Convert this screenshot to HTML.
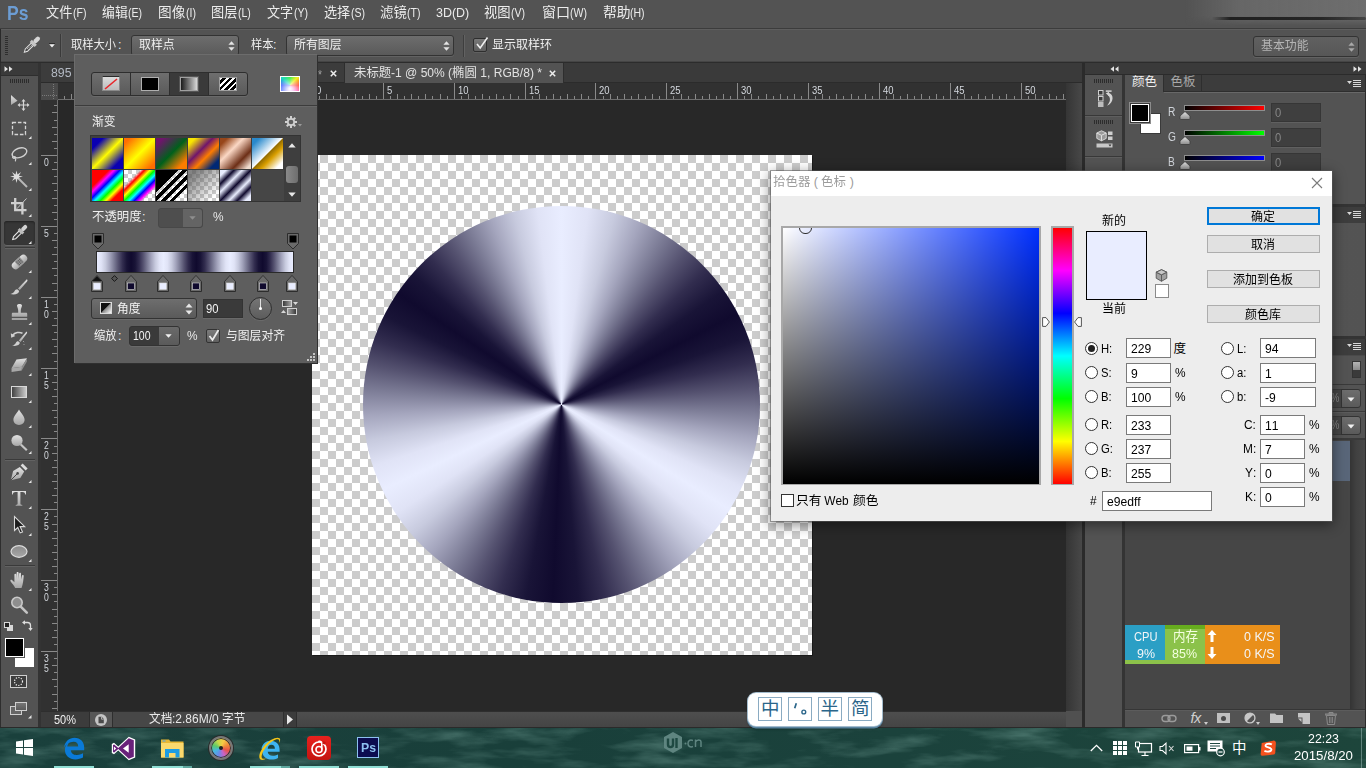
<!DOCTYPE html>
<html lang="zh"><head><meta charset="utf-8"><title>Photoshop</title><style>
html,body{margin:0;padding:0;background:#1f4841;}
body{width:1366px;height:768px;overflow:hidden;position:relative;font-family:"Liberation Sans","Noto Sans CJK SC",sans-serif;font-kerning:none;}
.b{position:absolute;display:block}
.t{position:absolute;white-space:nowrap;stroke-width:11px}
.l{display:inline-block;white-space:nowrap}
.l>span{display:inline-block;transform-origin:0 50%;white-space:nowrap}
</style></head><body>

<!-- s_base -->
<div class="b" style="left:0px;top:0px;width:1366px;height:728px;background:#535353;"></div><div class="b" style="left:0px;top:28px;width:1366px;height:1px;background:#3c3c3c;"></div><div class="b" style="left:0px;top:29px;width:1366px;height:1px;background:#5e5e5e;"></div><div class="t" style="left:7px;top:1.5px;font-size:21px;line-height:21px;color:#6c9dd4;font-weight:bold;"><span class="l" style="width:21.50px"><span style="transform:scaleX(0.837)">Ps</span></span></div><div class="t" style="left:46.4px;top:6px;font-size:13.5px;line-height:13.5px;color:#ececec;stroke:currentColor;stroke-width:14"><span class="l" style="width:26.35px"><span style="transform:scaleX(0.976)">文件</span></span><span class="l" style="width:13.45px"><span style="transform:scaleX(0.780)">(F)</span></span></div><div class="t" style="left:102.4px;top:6px;font-size:13.5px;line-height:13.5px;color:#ececec;stroke:currentColor;stroke-width:14"><span class="l" style="width:25.76px"><span style="transform:scaleX(0.954)">编辑</span></span><span class="l" style="width:14.04px"><span style="transform:scaleX(0.780)">(E)</span></span></div><div class="t" style="left:158.4px;top:6px;font-size:13.5px;line-height:13.5px;color:#ececec;stroke:currentColor;stroke-width:14"><span class="l" style="width:27.26px"><span style="transform:scaleX(1.010)">图像</span></span><span class="l" style="width:9.94px"><span style="transform:scaleX(0.780)">(I)</span></span></div><div class="t" style="left:211.4px;top:6px;font-size:13.5px;line-height:13.5px;color:#ececec;stroke:currentColor;stroke-width:14"><span class="l" style="width:26.33px"><span style="transform:scaleX(0.975)">图层</span></span><span class="l" style="width:12.87px"><span style="transform:scaleX(0.780)">(L)</span></span></div><div class="t" style="left:267.4px;top:6px;font-size:13.5px;line-height:13.5px;color:#ececec;stroke:currentColor;stroke-width:14"><span class="l" style="width:26.16px"><span style="transform:scaleX(0.969)">文字</span></span><span class="l" style="width:14.04px"><span style="transform:scaleX(0.780)">(Y)</span></span></div><div class="t" style="left:324.4px;top:6px;font-size:13.5px;line-height:13.5px;color:#ececec;stroke:currentColor;stroke-width:14"><span class="l" style="width:26.16px"><span style="transform:scaleX(0.969)">选择</span></span><span class="l" style="width:14.04px"><span style="transform:scaleX(0.780)">(S)</span></span></div><div class="t" style="left:380.4px;top:6px;font-size:13.5px;line-height:13.5px;color:#ececec;stroke:currentColor;stroke-width:14"><span class="l" style="width:26.75px"><span style="transform:scaleX(0.991)">滤镜</span></span><span class="l" style="width:13.45px"><span style="transform:scaleX(0.780)">(T)</span></span></div><div class="t" style="left:435.9px;top:6px;font-size:13.5px;line-height:13.5px;color:#ececec;stroke:currentColor;stroke-width:14"><span class="l" style="width:33.20px"><span style="transform:scaleX(0.922)">3D(D)</span></span></div><div class="t" style="left:484.4px;top:6px;font-size:13.5px;line-height:13.5px;color:#ececec;stroke:currentColor;stroke-width:14"><span class="l" style="width:26.66px"><span style="transform:scaleX(0.987)">视图</span></span><span class="l" style="width:14.04px"><span style="transform:scaleX(0.780)">(V)</span></span></div><div class="t" style="left:541.9px;top:6px;font-size:13.5px;line-height:13.5px;color:#ececec;stroke:currentColor;stroke-width:14"><span class="l" style="width:28.25px"><span style="transform:scaleX(1.046)">窗口</span></span><span class="l" style="width:16.95px"><span style="transform:scaleX(0.780)">(W)</span></span></div><div class="t" style="left:602.9px;top:6px;font-size:13.5px;line-height:13.5px;color:#ececec;stroke:currentColor;stroke-width:14"><span class="l" style="width:27.58px"><span style="transform:scaleX(1.021)">帮助</span></span><span class="l" style="width:14.62px"><span style="transform:scaleX(0.780)">(H)</span></span></div><div class="b" style="left:1185px;top:0px;width:181px;height:26px;background:linear-gradient(90deg,rgba(106,106,106,0) 0%,rgba(106,106,106,.85) 30%,rgba(110,110,110,1) 100%);-webkit-mask:linear-gradient(180deg,#000 0,#000 60%,transparent 100%);mask:linear-gradient(180deg,#000 0,#000 60%,transparent 100%)"></div><div class="b" style="left:1212px;top:17px;width:154px;height:3px;background:linear-gradient(90deg,rgba(30,30,30,0),rgba(28,28,28,.95) 12%,rgba(34,34,34,.95) 70%,rgba(60,60,60,.8));filter:blur(.7px);border-radius:2px"></div><div class="b" style="left:0px;top:61px;width:1366px;height:1px;background:#454545;"></div><div class="b" style="left:0px;top:62px;width:1366px;height:1px;background:#2c2c2c;"></div><div class="b" style="left:5px;top:36px;width:3px;height:20px;background:repeating-linear-gradient(180deg,#2e2e2e 0 1px,transparent 1px 2px);"></div><div class="b" style="left:60px;top:34px;width:1px;height:23px;background:#3a3a3a;"></div><div class="b" style="left:61px;top:34px;width:1px;height:23px;background:#5e5e5e;"></div><svg class="b" style="left:22px;top:35px;" width="19" height="19" viewBox="0 0 19 19"><g transform="translate(.9 1.2) scale(.92) rotate(45 9.5 9.5)"><path d="M7.700 8.500h3.600v9l-1.800 3.200-1.800-3.200z" fill="#4a4a4a" stroke="#e2e2e2" stroke-width="1.100"/><path d="M8.300 10h2.400M8.300 11.800h2.400M8.300 13.600h2.400M8.300 15.400h2.400" stroke="#e2e2e2" stroke-width=".7"/><rect x="5.700" y="5.300" width="7.600" height="3.400" fill="#c6c6c6"/><rect x="7.200" y="-2.300" width="4.600" height="8" rx="2.200" fill="#d6d6d6"/></g></svg><div class="b" style="left:49px;top:43px;width:6px;height:1px;background:#2e2e2e;"></div><svg class="b" style="left:49px;top:44px;" width="6" height="4" viewBox="0 0 6 4"><path d="M.2 .2h5.600L3 3.600z" fill="#f0f0f0"/></svg><div class="b" style="left:0px;top:29px;width:1px;height:34px;background:#2a2a2a;"></div><div class="t" style="left:71px;top:38.5px;font-size:12.5px;line-height:12.5px;color:#ececec;"><span class="l" style="width:45.00px"><span style="transform:scaleX(0.900)">取样大小</span></span></div><div class="t" style="left:118px;top:38.5px;font-size:12.5px;line-height:12.5px;color:#ececec;"><span class="l" style="width:3.47px"><span style="transform:scaleX(1.000)">:</span></span></div><div class="b" style="left:131px;top:35px;width:108px;height:21px;background:linear-gradient(#6d6d6d,#5a5a5a);border:1px solid #333;border-radius:3px;box-sizing:border-box;box-shadow:0 1px 0 #626262"></div><div class="t" style="left:139px;top:38.5px;font-size:12.5px;line-height:12.5px;color:#ececec;"><span class="l" style="width:35.62px"><span style="transform:scaleX(0.950)">取样点</span></span></div><svg class="b" style="left:228px;top:40.5px;" width="7" height="10" viewBox="0 0 7 10"><path d="M3.5 0.3L6.6 3.8H0.4zM3.5 9.700L6.6 6.200H0.4z" fill="#e4e4e4"/></svg><div class="t" style="left:250.5px;top:38.5px;font-size:12.5px;line-height:12.5px;color:#ececec;"><span class="l" style="width:22.50px"><span style="transform:scaleX(0.900)">样本</span></span></div><div class="t" style="left:273px;top:38.5px;font-size:12.5px;line-height:12.5px;color:#ececec;"><span class="l" style="width:3.47px"><span style="transform:scaleX(1.000)">:</span></span></div><div class="b" style="left:286px;top:35px;width:168px;height:21px;background:linear-gradient(#6d6d6d,#5a5a5a);border:1px solid #333;border-radius:3px;box-sizing:border-box;box-shadow:0 1px 0 #626262"></div><div class="t" style="left:294px;top:38.5px;font-size:12.5px;line-height:12.5px;color:#ececec;"><span class="l" style="width:47.50px"><span style="transform:scaleX(0.950)">所有图层</span></span></div><svg class="b" style="left:443px;top:40.5px;" width="7" height="10" viewBox="0 0 7 10"><path d="M3.5 0.3L6.6 3.8H0.4zM3.5 9.700L6.6 6.200H0.4z" fill="#e4e4e4"/></svg><div class="b" style="left:463px;top:35px;width:1px;height:22px;background:#3e3e3e;"></div><div class="b" style="left:464px;top:35px;width:1px;height:22px;background:#626262;"></div><div class="b" style="left:473px;top:37.5px;width:14px;height:14px;background:linear-gradient(#787878,#5e5e5e);border:1px solid #2e2e2e;border-radius:2px;box-sizing:border-box;box-shadow:0 1px 0 #606060"></div><svg class="b" style="left:474px;top:36px;" width="15" height="15" viewBox="0 0 15 15"><path d="M3 8l3.200 4L13.500 1.500" fill="none" stroke="#f0f0f0" stroke-width="1.600"/></svg><div class="t" style="left:492px;top:38.5px;font-size:12.5px;line-height:12.5px;color:#ececec;"><span class="l" style="width:60.00px"><span style="transform:scaleX(0.960)">显示取样环</span></span></div><div class="b" style="left:1253px;top:36px;width:106px;height:21px;background:linear-gradient(#606060,#575757);border:1px solid #333;border-radius:3px;box-sizing:border-box;box-shadow:0 1px 0 #626262"></div><div class="t" style="left:1261px;top:39.5px;font-size:12.5px;line-height:12.5px;color:#b4b4b4;"><span class="l" style="width:47.50px"><span style="transform:scaleX(0.950)">基本功能</span></span></div><svg class="b" style="left:1348px;top:41.5px;" width="7" height="10" viewBox="0 0 7 10"><path d="M3.5 0.3L6.6 3.8H0.4zM3.5 9.700L6.6 6.200H0.4z" fill="#a8a8a8"/></svg>
<!-- s_doc -->
<div class="b" style="left:38px;top:63px;width:3px;height:665px;background:#333;"></div><div class="b" style="left:41px;top:63px;width:1041px;height:20px;background:#3a3a3a;"></div><div class="b" style="left:41px;top:82px;width:1041px;height:1px;background:#2b2b2b;"></div><div class="b" style="left:41px;top:63px;width:303px;height:19px;background:#3c3c3c;"></div><div class="t" style="left:51px;top:67px;font-size:12.5px;line-height:12.5px;color:#b4bac4;"><span class="l" style="width:20.50px"><span style="transform:scaleX(0.983)">895</span></span></div><div class="b" style="left:344px;top:63px;width:220px;height:20px;background:#535353;border-left:1px solid #2e2e2e;border-right:1px solid #2e2e2e;box-sizing:border-box"></div><div class="t" style="left:318px;top:68px;font-size:13px;line-height:13px;color:#a0a0a0;"><span class="l" style="width:3.95px"><span style="transform:scaleX(0.780)">*</span></span></div><svg class="b" style="left:330px;top:70px;" width="7" height="7" viewBox="0 0 7 7"><path d="M.8 .8l5.400 5.400M6.200 .8L.8 6.200" stroke="#eee" stroke-width="1.500"/></svg><div class="t" style="left:354px;top:66.5px;font-size:12.5px;line-height:12.5px;color:#e2e2e2;"><span class="l" style="width:37.12px"><span style="transform:scaleX(0.990)">未标题</span></span><span class="l" style="width:61.14px"><span style="transform:scaleX(0.964)">-1&nbsp;@&nbsp;50%&nbsp;(</span></span><span class="l" style="width:24.75px"><span style="transform:scaleX(0.990)">椭圆</span></span><span class="l" style="width:64.98px"><span style="transform:scaleX(0.964)">&nbsp;1,&nbsp;RGB/8)&nbsp;*</span></span></div><svg class="b" style="left:549px;top:70px;" width="7" height="7" viewBox="0 0 7 7"><path d="M.8 .8l5.400 5.400M6.200 .8L.8 6.200" stroke="#eee" stroke-width="1.500"/></svg><div class="b" style="left:41px;top:83px;width:1025px;height:17px;background:#313131;"></div><div class="b" style="left:41px;top:100px;width:17px;height:611px;background:#313131;"></div><div class="b" style="left:41px;top:83px;width:17px;height:17px;background:#4a4a4a;"></div><div class="b" style="left:53px;top:84px;width:1px;height:15px;background:repeating-linear-gradient(180deg,#7a7a7a 0 1px,transparent 1px 2px);"></div><div class="b" style="left:42px;top:95px;width:15px;height:1px;background:repeating-linear-gradient(90deg,#7a7a7a 0 1px,transparent 1px 2px);"></div><div class="b" style="left:58px;top:100px;width:1008px;height:611px;background:#282828;"></div><svg class="b" style="left:0px;top:83px;" width="1066" height="17" viewBox="0 0 1066 17"><g stroke="#8a8a8a" stroke-width="1"><path d="M64.5 13V17"/><path d="M71.5 11V17"/><path d="M78.5 13V17"/><path d="M85.5 11V17"/><path d="M92.5 13V17"/><path d="M99.5 0V17"/><path d="M106.5 13V17"/><path d="M114.5 11V17"/><path d="M121.5 13V17"/><path d="M128.5 11V17"/><path d="M135.5 13V17"/><path d="M142.5 11V17"/><path d="M149.5 13V17"/><path d="M156.5 11V17"/><path d="M163.5 13V17"/><path d="M170.5 0V17"/><path d="M177.5 13V17"/><path d="M184.5 11V17"/><path d="M192.5 13V17"/><path d="M199.5 11V17"/><path d="M206.5 13V17"/><path d="M213.5 11V17"/><path d="M220.5 13V17"/><path d="M227.5 11V17"/><path d="M234.5 13V17"/><path d="M241.5 0V17"/><path d="M248.5 13V17"/><path d="M255.5 11V17"/><path d="M262.5 13V17"/><path d="M269.5 11V17"/><path d="M277.5 13V17"/><path d="M284.5 11V17"/><path d="M291.5 13V17"/><path d="M298.5 11V17"/><path d="M305.5 13V17"/><path d="M312.5 0V17"/><path d="M319.5 13V17"/><path d="M326.5 11V17"/><path d="M333.5 13V17"/><path d="M340.5 11V17"/><path d="M347.5 13V17"/><path d="M355.5 11V17"/><path d="M362.5 13V17"/><path d="M369.5 11V17"/><path d="M376.5 13V17"/><path d="M383.5 0V17"/><path d="M390.5 13V17"/><path d="M397.5 11V17"/><path d="M404.5 13V17"/><path d="M411.5 11V17"/><path d="M418.5 13V17"/><path d="M425.5 11V17"/><path d="M432.5 13V17"/><path d="M440.5 11V17"/><path d="M447.5 13V17"/><path d="M454.5 0V17"/><path d="M461.5 13V17"/><path d="M468.5 11V17"/><path d="M475.5 13V17"/><path d="M482.5 11V17"/><path d="M489.5 13V17"/><path d="M496.5 11V17"/><path d="M503.5 13V17"/><path d="M510.5 11V17"/><path d="M518.5 13V17"/><path d="M525.5 0V17"/><path d="M532.5 13V17"/><path d="M539.5 11V17"/><path d="M546.5 13V17"/><path d="M553.5 11V17"/><path d="M560.5 13V17"/><path d="M567.5 11V17"/><path d="M574.5 13V17"/><path d="M581.5 11V17"/><path d="M588.5 13V17"/><path d="M595.5 0V17"/><path d="M603.5 13V17"/><path d="M610.5 11V17"/><path d="M617.5 13V17"/><path d="M624.5 11V17"/><path d="M631.5 13V17"/><path d="M638.5 11V17"/><path d="M645.5 13V17"/><path d="M652.5 11V17"/><path d="M659.5 13V17"/><path d="M666.5 0V17"/><path d="M673.5 13V17"/><path d="M681.5 11V17"/><path d="M688.5 13V17"/><path d="M695.5 11V17"/><path d="M702.5 13V17"/><path d="M709.5 11V17"/><path d="M716.5 13V17"/><path d="M723.5 11V17"/><path d="M730.5 13V17"/><path d="M737.5 0V17"/><path d="M744.5 13V17"/><path d="M751.5 11V17"/><path d="M758.5 13V17"/><path d="M766.5 11V17"/><path d="M773.5 13V17"/><path d="M780.5 11V17"/><path d="M787.5 13V17"/><path d="M794.5 11V17"/><path d="M801.5 13V17"/><path d="M808.5 0V17"/><path d="M815.5 13V17"/><path d="M822.5 11V17"/><path d="M829.5 13V17"/><path d="M836.5 11V17"/><path d="M843.5 13V17"/><path d="M851.5 11V17"/><path d="M858.5 13V17"/><path d="M865.5 11V17"/><path d="M872.5 13V17"/><path d="M879.5 0V17"/><path d="M886.5 13V17"/><path d="M893.5 11V17"/><path d="M900.5 13V17"/><path d="M907.5 11V17"/><path d="M914.5 13V17"/><path d="M921.5 11V17"/><path d="M929.5 13V17"/><path d="M936.5 11V17"/><path d="M943.5 13V17"/><path d="M950.5 0V17"/><path d="M957.5 13V17"/><path d="M964.5 11V17"/><path d="M971.5 13V17"/><path d="M978.5 11V17"/><path d="M985.5 13V17"/><path d="M992.5 11V17"/><path d="M999.5 13V17"/><path d="M1006.5 11V17"/><path d="M1014.5 13V17"/><path d="M1021.5 0V17"/><path d="M1028.5 13V17"/><path d="M1035.5 11V17"/><path d="M1042.5 13V17"/><path d="M1049.5 11V17"/><path d="M1056.5 13V17"/><path d="M1063.5 11V17"/></g><path d="M58 16.5H1066" stroke="#6e6e6e"/></svg><div class="t" style="left:316px;top:84.5px;font-size:10.5px;line-height:10.5px;color:#d4d8de;"><span class="l" style="width:5.26px"><span style="transform:scaleX(0.900)">0</span></span></div><div class="t" style="left:387px;top:84.5px;font-size:10.5px;line-height:10.5px;color:#d4d8de;"><span class="l" style="width:5.26px"><span style="transform:scaleX(0.900)">5</span></span></div><div class="t" style="left:458px;top:84.5px;font-size:10.5px;line-height:10.5px;color:#d4d8de;"><span class="l" style="width:10.51px"><span style="transform:scaleX(0.900)">10</span></span></div><div class="t" style="left:529px;top:84.5px;font-size:10.5px;line-height:10.5px;color:#d4d8de;"><span class="l" style="width:10.51px"><span style="transform:scaleX(0.900)">15</span></span></div><div class="t" style="left:599px;top:84.5px;font-size:10.5px;line-height:10.5px;color:#d4d8de;"><span class="l" style="width:10.51px"><span style="transform:scaleX(0.900)">20</span></span></div><div class="t" style="left:670px;top:84.5px;font-size:10.5px;line-height:10.5px;color:#d4d8de;"><span class="l" style="width:10.51px"><span style="transform:scaleX(0.900)">25</span></span></div><div class="t" style="left:741px;top:84.5px;font-size:10.5px;line-height:10.5px;color:#d4d8de;"><span class="l" style="width:10.51px"><span style="transform:scaleX(0.900)">30</span></span></div><div class="t" style="left:812px;top:84.5px;font-size:10.5px;line-height:10.5px;color:#d4d8de;"><span class="l" style="width:10.51px"><span style="transform:scaleX(0.900)">35</span></span></div><div class="t" style="left:883px;top:84.5px;font-size:10.5px;line-height:10.5px;color:#d4d8de;"><span class="l" style="width:10.51px"><span style="transform:scaleX(0.900)">40</span></span></div><div class="t" style="left:954px;top:84.5px;font-size:10.5px;line-height:10.5px;color:#d4d8de;"><span class="l" style="width:10.51px"><span style="transform:scaleX(0.900)">45</span></span></div><div class="t" style="left:1025px;top:84.5px;font-size:10.5px;line-height:10.5px;color:#d4d8de;"><span class="l" style="width:10.51px"><span style="transform:scaleX(0.900)">50</span></span></div><svg class="b" style="left:41px;top:0px;" width="17" height="712" viewBox="0 0 17 712"><g stroke="#8a8a8a" stroke-width="1"><path d="M13 105.5H17"/><path d="M11 112.5H17"/><path d="M13 120.5H17"/><path d="M11 127.5H17"/><path d="M13 134.5H17"/><path d="M11 141.5H17"/><path d="M13 148.5H17"/><path d="M0 155.5H17"/><path d="M13 162.5H17"/><path d="M11 169.5H17"/><path d="M13 176.5H17"/><path d="M11 183.5H17"/><path d="M13 190.5H17"/><path d="M11 198.5H17"/><path d="M13 205.5H17"/><path d="M11 212.5H17"/><path d="M13 219.5H17"/><path d="M0 226.5H17"/><path d="M13 233.5H17"/><path d="M11 240.5H17"/><path d="M13 247.5H17"/><path d="M11 254.5H17"/><path d="M13 261.5H17"/><path d="M11 268.5H17"/><path d="M13 275.5H17"/><path d="M11 283.5H17"/><path d="M13 290.5H17"/><path d="M0 297.5H17"/><path d="M13 304.5H17"/><path d="M11 311.5H17"/><path d="M13 318.5H17"/><path d="M11 325.5H17"/><path d="M13 332.5H17"/><path d="M11 339.5H17"/><path d="M13 346.5H17"/><path d="M11 353.5H17"/><path d="M13 361.5H17"/><path d="M0 368.5H17"/><path d="M13 375.5H17"/><path d="M11 382.5H17"/><path d="M13 389.5H17"/><path d="M11 396.5H17"/><path d="M13 403.5H17"/><path d="M11 410.5H17"/><path d="M13 417.5H17"/><path d="M11 424.5H17"/><path d="M13 431.5H17"/><path d="M0 438.5H17"/><path d="M13 446.5H17"/><path d="M11 453.5H17"/><path d="M13 460.5H17"/><path d="M11 467.5H17"/><path d="M13 474.5H17"/><path d="M11 481.5H17"/><path d="M13 488.5H17"/><path d="M11 495.5H17"/><path d="M13 502.5H17"/><path d="M0 509.5H17"/><path d="M13 516.5H17"/><path d="M11 524.5H17"/><path d="M13 531.5H17"/><path d="M11 538.5H17"/><path d="M13 545.5H17"/><path d="M11 552.5H17"/><path d="M13 559.5H17"/><path d="M11 566.5H17"/><path d="M13 573.5H17"/><path d="M0 580.5H17"/><path d="M13 587.5H17"/><path d="M11 594.5H17"/><path d="M13 601.5H17"/><path d="M11 609.5H17"/><path d="M13 616.5H17"/><path d="M11 623.5H17"/><path d="M13 630.5H17"/><path d="M11 637.5H17"/><path d="M13 644.5H17"/><path d="M0 651.5H17"/><path d="M13 658.5H17"/><path d="M11 665.5H17"/><path d="M13 672.5H17"/><path d="M11 679.5H17"/><path d="M13 686.5H17"/><path d="M11 694.5H17"/><path d="M13 701.5H17"/><path d="M11 708.5H17"/></g><path d="M16.5 100V712" stroke="#6e6e6e"/></svg><div class="t" style="left:44px;top:157px;font-size:10.5px;line-height:10.5px;color:#d4d8de;"><span class="l" style="width:4.79px"><span style="transform:scaleX(0.820)">0</span></span></div><div class="t" style="left:44px;top:228px;font-size:10.5px;line-height:10.5px;color:#d4d8de;"><span class="l" style="width:4.79px"><span style="transform:scaleX(0.820)">5</span></span></div><div class="t" style="left:44px;top:299px;font-size:10.5px;line-height:10.5px;color:#d4d8de;"><span class="l" style="width:4.79px"><span style="transform:scaleX(0.820)">1</span></span></div><div class="t" style="left:44px;top:308.5px;font-size:10.5px;line-height:10.5px;color:#d4d8de;"><span class="l" style="width:4.79px"><span style="transform:scaleX(0.820)">0</span></span></div><div class="t" style="left:44px;top:370px;font-size:10.5px;line-height:10.5px;color:#d4d8de;"><span class="l" style="width:4.79px"><span style="transform:scaleX(0.820)">1</span></span></div><div class="t" style="left:44px;top:379.5px;font-size:10.5px;line-height:10.5px;color:#d4d8de;"><span class="l" style="width:4.79px"><span style="transform:scaleX(0.820)">5</span></span></div><div class="t" style="left:44px;top:440px;font-size:10.5px;line-height:10.5px;color:#d4d8de;"><span class="l" style="width:4.79px"><span style="transform:scaleX(0.820)">2</span></span></div><div class="t" style="left:44px;top:449.5px;font-size:10.5px;line-height:10.5px;color:#d4d8de;"><span class="l" style="width:4.79px"><span style="transform:scaleX(0.820)">0</span></span></div><div class="t" style="left:44px;top:511px;font-size:10.5px;line-height:10.5px;color:#d4d8de;"><span class="l" style="width:4.79px"><span style="transform:scaleX(0.820)">2</span></span></div><div class="t" style="left:44px;top:520.5px;font-size:10.5px;line-height:10.5px;color:#d4d8de;"><span class="l" style="width:4.79px"><span style="transform:scaleX(0.820)">5</span></span></div><div class="t" style="left:44px;top:582px;font-size:10.5px;line-height:10.5px;color:#d4d8de;"><span class="l" style="width:4.79px"><span style="transform:scaleX(0.820)">3</span></span></div><div class="t" style="left:44px;top:591.5px;font-size:10.5px;line-height:10.5px;color:#d4d8de;"><span class="l" style="width:4.79px"><span style="transform:scaleX(0.820)">0</span></span></div><div class="t" style="left:44px;top:653px;font-size:10.5px;line-height:10.5px;color:#d4d8de;"><span class="l" style="width:4.79px"><span style="transform:scaleX(0.820)">3</span></span></div><div class="t" style="left:44px;top:662.5px;font-size:10.5px;line-height:10.5px;color:#d4d8de;"><span class="l" style="width:4.79px"><span style="transform:scaleX(0.820)">5</span></span></div><div class="b" style="left:312px;top:155px;width:500px;height:500px;background:#fff;background-image:conic-gradient(#ccc 25%,#fff 0 50%,#ccc 0 75%,#fff 0);background-size:16px 16px;box-shadow:1px 1px 0 #1a1a1a"></div><div class="b" style="left:363.2px;top:206.2px;width:397.2px;height:397.2px;background:conic-gradient(from 0deg at 50% 50%,#e9edff 0.00deg,#e0e3f6 7.83deg,#c7cade 15.66deg,#a4a5bd 23.49deg,#7c7c96 31.32deg,#555270 39.15deg,#322d4f 46.98deg,#191437 54.81deg,#100a2e 62.64deg,#191437 70.06deg,#322d4f 77.49deg,#555270 84.92deg,#7c7c96 92.34deg,#a4a5bd 99.77deg,#c7cade 107.19deg,#e0e3f6 114.62deg,#e9edff 122.04deg,#e0e3f6 129.60deg,#c7cade 137.16deg,#a4a5bd 144.72deg,#7c7c96 152.28deg,#555270 159.84deg,#322d4f 167.40deg,#191437 174.96deg,#100a2e 182.52deg,#191437 190.26deg,#322d4f 198.00deg,#555270 205.74deg,#7c7c96 213.48deg,#a4a5bd 221.22deg,#c7cade 228.96deg,#e0e3f6 236.70deg,#e9edff 244.44deg,#e0e3f6 251.91deg,#c7cade 259.38deg,#a4a5bd 266.85deg,#7c7c96 274.32deg,#555270 281.79deg,#322d4f 289.26deg,#191437 296.73deg,#100a2e 304.20deg,#191437 311.18deg,#322d4f 318.15deg,#555270 325.12deg,#7c7c96 332.10deg,#a4a5bd 339.07deg,#c7cade 346.05deg,#e0e3f6 353.02deg,#e9edff 360.00deg);border-radius:50%"></div><div class="b" style="left:1066px;top:83px;width:16px;height:629px;background:linear-gradient(90deg,#353535,#484848);"></div><div class="b" style="left:1082px;top:63px;width:3px;height:665px;background:#2b2b2b;"></div><div class="b" style="left:41px;top:711px;width:1041px;height:17px;background:#474747;"></div><div class="b" style="left:41px;top:711px;width:1025px;height:1px;background:#2e2e2e;"></div><div class="b" style="left:41px;top:712px;width:48px;height:16px;background:#3c3c3c;"></div><div class="t" style="left:53.5px;top:713.5px;font-size:12.5px;line-height:12.5px;color:#f0f0f0;"><span class="l" style="width:22.00px"><span style="transform:scaleX(0.879)">50%</span></span></div><div class="b" style="left:89px;top:712px;width:24px;height:16px;background:#565656;"></div><div class="b" style="left:89px;top:712px;width:1px;height:16px;background:#2e2e2e;"></div><div class="b" style="left:112px;top:712px;width:1px;height:16px;background:#2e2e2e;"></div><div class="b" style="left:95px;top:714px;width:12px;height:12px;background:#c4c4c4;border-radius:50%"></div><svg class="b" style="left:97px;top:716px;" width="8" height="8" viewBox="0 0 8 8"><path d="M1.5 .8h3.200L6.800 3v4.200H1.500z" fill="#4a4a4a"/><path d="M4.500 1v2.200h2.200" fill="none" stroke="#c4c4c4" stroke-width=".8"/></svg><div class="t" style="left:148.5px;top:713px;font-size:12.5px;line-height:12.5px;color:#e8e8e8;"><span class="l" style="width:23.25px"><span style="transform:scaleX(0.930)">文档</span></span><span class="l" style="width:50.00px"><span style="transform:scaleX(0.959)">:2.86M/0&nbsp;</span></span><span class="l" style="width:23.25px"><span style="transform:scaleX(0.930)">字节</span></span></div><div class="b" style="left:283px;top:712px;width:1px;height:16px;background:#2e2e2e;"></div><div class="b" style="left:284px;top:712px;width:12px;height:16px;background:#3c3c3c;"></div><svg class="b" style="left:286px;top:714px;" width="8" height="11" viewBox="0 0 8 11"><path d="M1 0.5L7 5.5L1 10.5z" fill="#e8e8e8"/></svg><div class="b" style="left:296px;top:712px;width:1px;height:16px;background:#2e2e2e;"></div><div class="b" style="left:297px;top:712px;width:769px;height:16px;background:linear-gradient(#4e4e4e,#444);"></div><div class="b" style="left:1066px;top:711px;width:16px;height:17px;background:#505050;"></div>
<!-- s_tools -->
<div class="b" style="left:0px;top:63px;width:1px;height:665px;background:#2e2e2e;"></div><div class="b" style="left:1px;top:63px;width:37px;height:12px;background:#3a3a3a;"></div><div class="b" style="left:1px;top:75px;width:37px;height:1px;background:#2e2e2e;"></div><svg class="b" style="left:4px;top:66px;" width="10" height="6" viewBox="0 0 10 6"><path d="M0.500 0.300L4 3 0.500 5.700zM5 0.300L8.500 3 5 5.700z" fill="#e4e4e4"/></svg><div class="b" style="left:10px;top:79px;width:20px;height:4px;background:repeating-linear-gradient(90deg,#2c2c2c 0 1px,transparent 1px 2px);"></div><div class="b" style="left:4px;top:221px;width:31px;height:24px;background:#363636;border-radius:3px;box-shadow:0 1px 0 #686868, inset 0 1px 2px #222"></div><div class="b" style="left:5px;top:247px;width:30px;height:1px;background:#3a3a3a;"></div><div class="b" style="left:5px;top:248px;width:30px;height:1px;background:#626262;"></div><div class="b" style="left:5px;top:458.5px;width:30px;height:1px;background:#3a3a3a;"></div><div class="b" style="left:5px;top:459.5px;width:30px;height:1px;background:#626262;"></div><div class="b" style="left:5px;top:565px;width:30px;height:1px;background:#3a3a3a;"></div><div class="b" style="left:5px;top:566px;width:30px;height:1px;background:#626262;"></div><svg class="b" style="left:9px;top:92px;" width="22" height="20" viewBox="0 0 22 20"><defs><linearGradient id="ig" x1="0" y1="0" x2="0" y2="1"><stop offset="0" stop-color="#e2e2e2"/><stop offset="1" stop-color="#a6a6a6"/></linearGradient><linearGradient id="ig2" x1="0" y1="0" x2="1" y2="1"><stop offset="0" stop-color="#dcdcdc"/><stop offset="1" stop-color="#8c8c8c"/></linearGradient></defs><path d="M2 3v10l6.5-4.2z" fill="url(#ig)"/><path d="M14.5 8.5v9M10 13h9" stroke="#d8d8d8" stroke-width="1.2" fill="none"/><path d="M14.5 7l2 2.4h-4zM14.5 19l2-2.4h-4zM8.5 13l2.4-2v4zM20.5 13l-2.4-2v4z" fill="#d8d8d8"/></svg><svg class="b" style="left:9px;top:118px;" width="22" height="20" viewBox="0 0 22 20"><rect x="3.5" y="4.5" width="13" height="12" fill="none" stroke="#d4d4d4" stroke-width="1.3" stroke-dasharray="3.6 1.8"/></svg><svg class="b" style="left:28px;top:135.5px;" width="3.5" height="3.5" viewBox="0 0 3.5 3.5"><path d="M3.500 0V3.500H0z" fill="#e4e4e4"/></svg><svg class="b" style="left:9px;top:144px;" width="22" height="20" viewBox="0 0 22 20"><ellipse cx="10.5" cy="8.8" rx="7.6" ry="4.6" transform="rotate(-20 10.5 8.8)" fill="none" stroke="#d0d0d0" stroke-width="1.4"/><path d="M4.2 12.2c-1.6 1.2 0.3 2.8 1.8 1.9c1.2-.8 0-2-1.2-1.2M6 14.2c.8.8 1 2 .2 3.2" fill="none" stroke="#d0d0d0" stroke-width="1.2"/></svg><svg class="b" style="left:28px;top:161.5px;" width="3.5" height="3.5" viewBox="0 0 3.5 3.5"><path d="M3.500 0V3.500H0z" fill="#e4e4e4"/></svg><svg class="b" style="left:9px;top:170px;" width="22" height="20" viewBox="0 0 22 20"><path d="M7.5 0.5l1 4 3.6-2.4-2.3 3.6 4.2.9-4.2.9 2.3 3.6-3.6-2.4-1 4.2-1-4.2-3.6 2.4 2.3-3.6L1 6.6l4.2-.9L2.9 2.1l3.6 2.4z" fill="#dedede"/><path d="M9.5 8.5l8.5 8.5" stroke="#b8b8b8" stroke-width="2"/></svg><svg class="b" style="left:28px;top:187.5px;" width="3.5" height="3.5" viewBox="0 0 3.5 3.5"><path d="M3.500 0V3.500H0z" fill="#e4e4e4"/></svg><svg class="b" style="left:9px;top:196px;" width="22" height="20" viewBox="0 0 22 20"><path d="M6.200 2V14.200H17.500M2 7.200H13.400V18.500" fill="none" stroke="#cfcfcf" stroke-width="2.300"/><path d="M7.800 12.800L17.500 2.500" stroke="#c4c4c4" stroke-width="1"/></svg><svg class="b" style="left:28px;top:213.5px;" width="3.5" height="3.5" viewBox="0 0 3.5 3.5"><path d="M3.500 0V3.500H0z" fill="#e4e4e4"/></svg><svg class="b" style="left:9px;top:223px;" width="22" height="20" viewBox="0 0 22 20"><g transform="translate(2.300 1.600) scale(.86) rotate(45 9.5 9.5)"><path d="M7.700 8.500h3.600v9l-1.800 3.200-1.800-3.200z" fill="#3a3a3a" stroke="#e6e6e6" stroke-width="1.200"/><rect x="5.700" y="5.300" width="7.600" height="3.400" fill="#bcbcbc"/><rect x="7.200" y="-2.300" width="4.600" height="8" rx="2.200" fill="#d2d2d2"/></g></svg><svg class="b" style="left:28px;top:240.5px;" width="3.5" height="3.5" viewBox="0 0 3.5 3.5"><path d="M3.500 0V3.500H0z" fill="#e4e4e4"/></svg><svg class="b" style="left:9px;top:252px;" width="22" height="20" viewBox="0 0 22 20"><g transform="rotate(-42 10.5 10)"><rect x="1.5" y="6.2" width="18" height="7.6" rx="3.8" fill="url(#ig)"/><rect x="7" y="6.2" width="7" height="7.6" fill="#9a9a9a"/><g fill="#5a5a5a"><circle cx="8.6" cy="8.2" r=".7"/><circle cx="10.5" cy="8.2" r=".7"/><circle cx="12.4" cy="8.2" r=".7"/><circle cx="8.6" cy="10" r=".7"/><circle cx="10.5" cy="10" r=".7"/><circle cx="12.4" cy="10" r=".7"/><circle cx="8.6" cy="11.8" r=".7"/><circle cx="10.5" cy="11.8" r=".7"/><circle cx="12.4" cy="11.8" r=".7"/></g></g></svg><svg class="b" style="left:28px;top:269.5px;" width="3.5" height="3.5" viewBox="0 0 3.5 3.5"><path d="M3.500 0V3.500H0z" fill="#e4e4e4"/></svg><svg class="b" style="left:9px;top:278px;" width="22" height="20" viewBox="0 0 22 20"><path d="M17.8 1.2c.9.6.9 1.4.3 2.2L10.8 12 9 10.4z" fill="url(#ig)"/><path d="M8.3 11.2l1.9 1.7c-.4 2.6-3.6 4.2-8.9 3.2 2.6-.6 3.6-1.7 4.3-3.1.6-1.2 1.5-1.9 2.7-1.8z" fill="#d0d0d0"/></svg><svg class="b" style="left:28px;top:295.5px;" width="3.5" height="3.5" viewBox="0 0 3.5 3.5"><path d="M3.500 0V3.500H0z" fill="#e4e4e4"/></svg><svg class="b" style="left:9px;top:304px;" width="22" height="20" viewBox="0 0 22 20"><path d="M8 1.5c0-2 5-2 5 0 0 1.5-1.2 2.800-1.2 5.200v2.100h5.200c.8 0 1.2.5 1.2 1.200v2.800H2.800V10c0-.7.4-1.200 1.200-1.200h5.200V6.700c0-2.400-1.200-3.700-1.200-5.200z" fill="url(#ig)"/><path d="M2.800 15h15.400" stroke="#c8c8c8" stroke-width="1.4"/></svg><svg class="b" style="left:28px;top:321.5px;" width="3.5" height="3.5" viewBox="0 0 3.5 3.5"><path d="M3.500 0V3.500H0z" fill="#e4e4e4"/></svg><svg class="b" style="left:9px;top:329px;" width="22" height="20" viewBox="0 0 22 20"><path d="M17.500 2.500c.8.5.8 1.200.3 2L11.500 13 9.800 11.600z" fill="url(#ig)"/><path d="M9.200 12.300l1.700 1.500c-.4 2.300-3.200 3.700-7.900 2.800 2.300-.5 3.200-1.500 3.800-2.700.5-1.100 1.300-1.700 2.400-1.600z" fill="#d0d0d0"/><path d="M3.500 6.500C6 3.200 10.500 2.800 13.500 4.200" fill="none" stroke="#cfcfcf" stroke-width="1.500"/><path d="M1.800 4.200l.4 4.600 4.200-1.800z" fill="#cfcfcf"/><path d="M14 12l1.500 1.500M14.500 15l1 1" stroke="#bbb" stroke-width="1" stroke-dasharray="1 1"/></svg><svg class="b" style="left:28px;top:346.5px;" width="3.5" height="3.5" viewBox="0 0 3.5 3.5"><path d="M3.500 0V3.500H0z" fill="#e4e4e4"/></svg><svg class="b" style="left:9px;top:355px;" width="22" height="20" viewBox="0 0 22 20"><path d="M7.500 4.500l10.500-1.300L13 11.800 2.500 13.200z" fill="url(#ig)"/><path d="M2.500 13.200L13 11.800l-.3 3.700L2.600 17z" fill="#a8a8a8"/><path d="M13 11.800l5-8.600-.2 3.600-5.100 8.700z" fill="#8f8f8f"/></svg><svg class="b" style="left:28px;top:372.5px;" width="3.5" height="3.5" viewBox="0 0 3.5 3.5"><path d="M3.500 0V3.500H0z" fill="#e4e4e4"/></svg><svg class="b" style="left:9px;top:382px;" width="22" height="20" viewBox="0 0 22 20"><rect x="2.500" y="4.500" width="15" height="11" fill="url(#gg)" stroke="#d8d8d8" stroke-width="1"/><defs><linearGradient id="gg"><stop offset="0" stop-color="#3c3c3c"/><stop offset="1" stop-color="#cfcfcf"/></linearGradient></defs></svg><svg class="b" style="left:28px;top:399.5px;" width="3.5" height="3.5" viewBox="0 0 3.5 3.5"><path d="M3.500 0V3.500H0z" fill="#e4e4e4"/></svg><svg class="b" style="left:9px;top:407px;" width="22" height="20" viewBox="0 0 22 20"><path d="M10 2.500c2.200 3.800 5.600 6.800 5.600 10.300 0 3-2.500 5.200-5.600 5.200s-5.600-2.200-5.600-5.200c0-3.500 3.400-6.500 5.600-10.300z" fill="url(#ig)"/></svg><svg class="b" style="left:28px;top:424.5px;" width="3.5" height="3.5" viewBox="0 0 3.5 3.5"><path d="M3.500 0V3.500H0z" fill="#e4e4e4"/></svg><svg class="b" style="left:9px;top:433px;" width="22" height="20" viewBox="0 0 22 20"><circle cx="8" cy="7.500" r="5.600" fill="url(#ig)"/><path d="M11.800 11.500l6 5.800" stroke="#c4c4c4" stroke-width="2.200"/></svg><svg class="b" style="left:28px;top:450.5px;" width="3.5" height="3.5" viewBox="0 0 3.5 3.5"><path d="M3.500 0V3.500H0z" fill="#e4e4e4"/></svg><svg class="b" style="left:9px;top:462px;" width="22" height="20" viewBox="0 0 22 20"><path d="M1.800 18.200l2.300-9.300 6.700-3.900 4.400 4.400-3.900 6.700z" fill="url(#ig)"/><path d="M1.800 18.200l6.200-6.200" stroke="#4a4a4a" stroke-width="1"/><circle cx="8.600" cy="11.400" r="1.300" fill="#4a4a4a"/><path d="M11.600 3.400l2-2 5 5-2 2z" fill="#dcdcdc"/></svg><svg class="b" style="left:28px;top:479.5px;" width="3.5" height="3.5" viewBox="0 0 3.5 3.5"><path d="M3.500 0V3.500H0z" fill="#e4e4e4"/></svg><svg class="b" style="left:9px;top:488px;" width="22" height="20" viewBox="0 0 22 20"><path d="M3 3h14v3.600h-.8c-.3-1.800-1-2.500-2.800-2.500h-2v11.400c0 1 .5 1.400 1.900 1.500v.8H6.700V17c1.400-.1 1.900-.5 1.900-1.500V4.100h-2c-1.800 0-2.500.7-2.800 2.500H3z" fill="url(#ig)"/></svg><svg class="b" style="left:28px;top:505.5px;" width="3.5" height="3.5" viewBox="0 0 3.5 3.5"><path d="M3.500 0V3.500H0z" fill="#e4e4e4"/></svg><svg class="b" style="left:9px;top:515px;" width="22" height="20" viewBox="0 0 22 20"><path d="M5.500 1.500v14l3.300-3 2.400 5.400 2.300-1-2.400-5.300h4.600z" fill="#1c1c1c" stroke="#d8d8d8" stroke-width="1.100"/></svg><svg class="b" style="left:28px;top:532.5px;" width="3.5" height="3.5" viewBox="0 0 3.5 3.5"><path d="M3.500 0V3.500H0z" fill="#e4e4e4"/></svg><svg class="b" style="left:9px;top:541px;" width="22" height="20" viewBox="0 0 22 20"><ellipse cx="10" cy="10.500" rx="8" ry="5.800" fill="url(#eg)" stroke="#dcdcdc" stroke-width="1.200"/><defs><linearGradient id="eg" x1="0" y1="0" x2="0" y2="1"><stop offset="0" stop-color="#8a8a8a"/><stop offset="1" stop-color="#a8a8a8"/></linearGradient></defs></svg><svg class="b" style="left:28px;top:558.5px;" width="3.5" height="3.5" viewBox="0 0 3.5 3.5"><path d="M3.500 0V3.500H0z" fill="#e4e4e4"/></svg><svg class="b" style="left:9px;top:570px;" width="22" height="20" viewBox="0 0 22 20"><path d="M6.200 18c-1-2.500-3.200-4.600-4.700-6.800-.6-1 .6-1.800 1.500-1.100l2.400 2.100V4.600c0-1.300 1.800-1.300 1.900 0l.3 4.400V3c0-1.400 2-1.400 2 0v6l.5-5.300c.1-1.300 1.900-1.200 1.900.1v5.800l.9-3.800c.3-1.200 1.900-.9 1.800.3-.3 3.800-.6 8-2.200 11.900z" fill="url(#ig)"/></svg><svg class="b" style="left:28px;top:587.5px;" width="3.5" height="3.5" viewBox="0 0 3.5 3.5"><path d="M3.500 0V3.500H0z" fill="#e4e4e4"/></svg><svg class="b" style="left:9px;top:595px;" width="22" height="20" viewBox="0 0 22 20"><circle cx="8" cy="7.500" r="5.200" fill="#8e8e8e" stroke="#c8c8c8" stroke-width="1.600"/><path d="M12 11.800l5.800 5.800" stroke="#c4c4c4" stroke-width="2.600" stroke-linecap="round"/></svg><div class="b" style="left:7px;top:625px;width:6px;height:6px;background:#d8d8d8;"></div><div class="b" style="left:4px;top:622px;width:6px;height:6px;background:#222;border:1px solid #d8d8d8;box-sizing:border-box"></div><svg class="b" style="left:21px;top:620px;" width="12" height="12" viewBox="0 0 12 12"><path d="M3.500 2.500h3c2 0 3 1 3 3v3" fill="none" stroke="#ddd" stroke-width="1.300"/><path d="M1 2.500L4 .3v4.400zM9.500 11L7.300 8h4.400z" fill="#ddd"/></svg><div class="b" style="left:15px;top:648px;width:19px;height:19px;background:#fff;"></div><div class="b" style="left:5px;top:638px;width:19px;height:19px;background:#000;border:1px solid #fff;box-sizing:border-box;box-shadow:0 0 0 1px #555"></div><div class="b" style="left:10px;top:675px;width:17px;height:13px;background:#3d3d3d;border:1px solid #cfcfcf;box-sizing:border-box"></div><svg class="b" style="left:13px;top:676px;" width="11" height="11" viewBox="0 0 11 11"><circle cx="5.500" cy="5.500" r="4" fill="none" stroke="#eee" stroke-width="1.200" stroke-dasharray="1.200 1.400"/></svg><div class="b" style="left:10px;top:706px;width:12px;height:9px;background:#666;border:1px solid #cfcfcf;box-sizing:border-box"></div><div class="b" style="left:15px;top:702px;width:12px;height:9px;background:linear-gradient(#777,#5a5a5a);border:1px solid #cfcfcf;box-sizing:border-box"></div><svg class="b" style="left:28px;top:715px;" width="3.5" height="3.5" viewBox="0 0 3.5 3.5"><path d="M3.500 0V3.500H0z" fill="#e4e4e4"/></svg>
<!-- s_right -->
<div class="b" style="left:1085px;top:63px;width:281px;height:11px;background:#3a3a3a;"></div><div class="b" style="left:1085px;top:74px;width:281px;height:1px;background:#2b2b2b;"></div><svg class="b" style="left:1110px;top:66px;" width="10" height="6" viewBox="0 0 10 6"><path d="M4 .3L.5 3 4 5.700zM8.500 .3L5 3l3.500 2.700z" fill="#e4e4e4"/></svg><svg class="b" style="left:1353px;top:66px;" width="10" height="6" viewBox="0 0 10 6"><path d="M.5 .3L4 3 .5 5.700zM5 .3L8.500 3 5 5.700z" fill="#e4e4e4"/></svg><div class="b" style="left:1122px;top:75px;width:3px;height:653px;background:#343434;"></div><div class="b" style="left:1085px;top:115px;width:37px;height:1px;background:#383838;"></div><div class="b" style="left:1085px;top:116px;width:37px;height:1px;background:#5e5e5e;"></div><div class="b" style="left:1085px;top:156px;width:37px;height:1px;background:#383838;"></div><div class="b" style="left:1085px;top:157px;width:37px;height:1px;background:#5e5e5e;"></div><div class="b" style="left:1094px;top:79px;width:20px;height:4px;background:repeating-linear-gradient(90deg,#2c2c2c 0 1px,transparent 1px 2px);"></div><div class="b" style="left:1094px;top:120px;width:20px;height:4px;background:repeating-linear-gradient(90deg,#2c2c2c 0 1px,transparent 1px 2px);"></div><svg class="b" style="left:1097px;top:89px;" width="18" height="19" viewBox="0 0 18 19"><rect x="1.500" y="1.500" width="4.500" height="4.500" fill="#3c3c3c" stroke="#cfcfcf"/><rect x="1.500" y="7.500" width="4.500" height="4.500" fill="#3c3c3c" stroke="#cfcfcf"/><rect x="1" y="13" width="5.500" height="5" fill="#bdbdbd"/><path d="M8.800 1.400h5.800v1.400H8.800z" fill="#dcdcdc"/><path d="M8.800 4.200L12 3v4.200z" fill="#dcdcdc"/><path d="M11 3.400C17.500 5 17 13.500 10 16.800 13.500 13 14 8.500 11 6.500z" fill="#d4d4d4"/></svg><svg class="b" style="left:1096px;top:130px;" width="18" height="19" viewBox="0 0 18 19"><path d="M5.500 .8l4.700 2.200v5.400L5.500 10.800.8 8.400V3z" fill="#9a9a9a" stroke="#d6d6d6" stroke-width="1"/><path d="M.8 3l4.700 2.300L10.200 3M5.500 5.300v5.500" fill="none" stroke="#e0e0e0" stroke-width="1"/><rect x="12" y="1.500" width="4.500" height="3.500" fill="#cfcfcf"/><rect x="12" y="6.500" width="4.500" height="3.500" fill="#cfcfcf"/><rect x=".5" y="13.500" width="16" height="4" fill="#c8c8c8"/><path d="M12.500 14.500h3l-1.500 2z" fill="#333"/></svg><div class="b" style="left:1125px;top:75px;width:240px;height:16px;background:#3c3c3c;"></div><div class="b" style="left:1125px;top:91px;width:240px;height:1px;background:#2e2e2e;"></div><div class="b" style="left:1125px;top:92px;width:240px;height:1px;background:#686868;"></div><div class="b" style="left:1125px;top:75px;width:39px;height:18px;background:#535353;"></div><div class="b" style="left:1163px;top:75px;width:1px;height:17px;background:#2e2e2e;"></div><div class="b" style="left:1201px;top:75px;width:1px;height:16px;background:#2e2e2e;"></div><div class="t" style="left:1132px;top:76px;font-size:12.5px;line-height:12.5px;color:#f0f0f0;"><span class="l" style="width:25.00px"><span style="transform:scaleX(1.000)">颜色</span></span></div><div class="t" style="left:1170.5px;top:76px;font-size:12.5px;line-height:12.5px;color:#a8a8a8;"><span class="l" style="width:25.00px"><span style="transform:scaleX(1.000)">色板</span></span></div><svg class="b" style="left:1347px;top:80px;" width="14" height="7" viewBox="0 0 14 7"><path d="M0 1h5L2.500 4z M6 0h8v1H6zM6 2h8v1H6zM6 4h8v1H6zM6 6h8v1H6z" fill="#d8d8d8"/></svg><div class="b" style="left:1365px;top:75px;width:1px;height:653px;background:#2c2c2c;"></div><div class="b" style="left:1140.5px;top:113.5px;width:19px;height:19px;background:#fff;box-shadow:0 0 0 1px #3a3a3a"></div><div class="b" style="left:1129px;top:102px;width:22px;height:22px;background:#000;border:1px solid #8c8c8c;box-sizing:border-box;box-shadow:inset 0 0 0 1px #3a3a3a, inset 0 0 0 2px #fff"></div><div class="t" style="left:1168px;top:106px;font-size:12px;line-height:12px;color:#d0d4da;"><span class="l" style="width:7.37px"><span style="transform:scaleX(0.850)">R</span></span></div><div class="b" style="left:1184px;top:105px;width:81px;height:6px;background:linear-gradient(90deg,#000,#ff0000);border:1px solid #8e8e8e;box-sizing:border-box"></div><svg class="b" style="left:1179px;top:111px;" width="12" height="9" viewBox="0 0 12 9"><defs><linearGradient id="th0" x1="0" y1="0" x2="0" y2="1"><stop offset="0" stop-color="#e8e8e8"/><stop offset="1" stop-color="#8a8a8a"/></linearGradient></defs><path d="M6 .5L11 5V7.500Q11 8.500 10 8.500H2Q1 8.500 1 7.500V5z" fill="url(#th0)" stroke="#3c3c3c" stroke-width=".8"/></svg><div class="b" style="left:1271px;top:103px;width:50px;height:19px;background:#3f3f3f;border:1px solid #363636;box-sizing:border-box;box-shadow:0 1px 0 #606060"></div><div class="t" style="left:1274.5px;top:106.5px;font-size:12.5px;line-height:12.5px;color:#858585;"><span class="l" style="width:6.26px"><span style="transform:scaleX(0.900)">0</span></span></div><div class="t" style="left:1168px;top:131px;font-size:12px;line-height:12px;color:#d0d4da;"><span class="l" style="width:7.93px"><span style="transform:scaleX(0.850)">G</span></span></div><div class="b" style="left:1184px;top:130px;width:81px;height:6px;background:linear-gradient(90deg,#000,#00ff00);border:1px solid #8e8e8e;box-sizing:border-box"></div><svg class="b" style="left:1179px;top:136px;" width="12" height="9" viewBox="0 0 12 9"><defs><linearGradient id="th1" x1="0" y1="0" x2="0" y2="1"><stop offset="0" stop-color="#e8e8e8"/><stop offset="1" stop-color="#8a8a8a"/></linearGradient></defs><path d="M6 .5L11 5V7.500Q11 8.500 10 8.500H2Q1 8.500 1 7.500V5z" fill="url(#th1)" stroke="#3c3c3c" stroke-width=".8"/></svg><div class="b" style="left:1271px;top:128px;width:50px;height:19px;background:#3f3f3f;border:1px solid #363636;box-sizing:border-box;box-shadow:0 1px 0 #606060"></div><div class="t" style="left:1274.5px;top:131.5px;font-size:12.5px;line-height:12.5px;color:#858585;"><span class="l" style="width:6.26px"><span style="transform:scaleX(0.900)">0</span></span></div><div class="t" style="left:1168px;top:156px;font-size:12px;line-height:12px;color:#d0d4da;"><span class="l" style="width:6.80px"><span style="transform:scaleX(0.850)">B</span></span></div><div class="b" style="left:1184px;top:155px;width:81px;height:6px;background:linear-gradient(90deg,#000,#0000ff);border:1px solid #8e8e8e;box-sizing:border-box"></div><svg class="b" style="left:1179px;top:161px;" width="12" height="9" viewBox="0 0 12 9"><defs><linearGradient id="th2" x1="0" y1="0" x2="0" y2="1"><stop offset="0" stop-color="#e8e8e8"/><stop offset="1" stop-color="#8a8a8a"/></linearGradient></defs><path d="M6 .5L11 5V7.500Q11 8.500 10 8.500H2Q1 8.500 1 7.500V5z" fill="url(#th2)" stroke="#3c3c3c" stroke-width=".8"/></svg><div class="b" style="left:1271px;top:153px;width:50px;height:19px;background:#3f3f3f;border:1px solid #363636;box-sizing:border-box;box-shadow:0 1px 0 #606060"></div><div class="t" style="left:1274.5px;top:156.5px;font-size:12.5px;line-height:12.5px;color:#858585;"><span class="l" style="width:6.26px"><span style="transform:scaleX(0.900)">0</span></span></div><div class="b" style="left:1125px;top:204px;width:241px;height:3px;background:#343434;"></div><div class="b" style="left:1125px;top:207px;width:240px;height:16px;background:#3d3d3d;"></div><div class="b" style="left:1125px;top:223px;width:240px;height:113px;background:linear-gradient(90deg,#555 0%,#535353 100%);"></div><svg class="b" style="left:1347px;top:211px;" width="14" height="7" viewBox="0 0 14 7"><path d="M0 1h5L2.500 4z M6 0h8v1H6zM6 2h8v1H6zM6 4h8v1H6zM6 6h8v1H6z" fill="#d8d8d8"/></svg><div class="b" style="left:1125px;top:336px;width:241px;height:3px;background:#343434;"></div><div class="b" style="left:1125px;top:339px;width:240px;height:16px;background:#3d3d3d;"></div><svg class="b" style="left:1347px;top:343px;" width="14" height="7" viewBox="0 0 14 7"><path d="M0 1h5L2.500 4z M6 0h8v1H6zM6 2h8v1H6zM6 4h8v1H6zM6 6h8v1H6z" fill="#d8d8d8"/></svg><div class="b" style="left:1125px;top:355px;width:240px;height:1px;background:#4a4a4a;"></div><div class="b" style="left:1125px;top:356px;width:240px;height:28px;background:#535353;"></div><div class="b" style="left:1352px;top:361px;width:9px;height:17px;background:#3a3a3a;border:1px solid #333;box-sizing:border-box"></div><div class="b" style="left:1353px;top:362px;width:7px;height:8px;background:linear-gradient(#b4b4b4,#8a8a8a);"></div><div class="b" style="left:1125px;top:384px;width:240px;height:1px;background:#3a3a3a;"></div><div class="b" style="left:1125px;top:385px;width:240px;height:26px;background:#535353;"></div><div class="b" style="left:1125px;top:411px;width:240px;height:1px;background:#3a3a3a;"></div><div class="b" style="left:1125px;top:412px;width:240px;height:1px;background:#5c5c5c;"></div><div class="b" style="left:1125px;top:413px;width:240px;height:25px;background:#535353;"></div><div class="b" style="left:1125px;top:438px;width:240px;height:2px;background:#3a3a3a;"></div><div class="b" style="left:1300px;top:389px;width:42px;height:19px;background:#454545;border:1px solid #3a3a3a;box-sizing:border-box"></div><div class="t" style="left:1331px;top:392px;font-size:12px;line-height:12px;color:#8a8a8a;"><span class="l" style="width:8.32px"><span style="transform:scaleX(0.780)">%</span></span></div><div class="b" style="left:1341px;top:389px;width:20px;height:19px;background:linear-gradient(#6e6e6e,#5a5a5a);border:1px solid #333;border-radius:0 3px 3px 0;box-sizing:border-box"></div><svg class="b" style="left:1347px;top:397px;" width="8" height="5" viewBox="0 0 8 5"><path d="M.5 .5h7L4 4.500z" fill="#f0f0f0"/></svg><div class="b" style="left:1300px;top:416px;width:42px;height:19px;background:#454545;border:1px solid #3a3a3a;box-sizing:border-box"></div><div class="t" style="left:1331px;top:419px;font-size:12px;line-height:12px;color:#8a8a8a;"><span class="l" style="width:8.32px"><span style="transform:scaleX(0.780)">%</span></span></div><div class="b" style="left:1341px;top:416px;width:20px;height:19px;background:linear-gradient(#6e6e6e,#5a5a5a);border:1px solid #333;border-radius:0 3px 3px 0;box-sizing:border-box"></div><svg class="b" style="left:1347px;top:424px;" width="8" height="5" viewBox="0 0 8 5"><path d="M.5 .5h7L4 4.500z" fill="#f0f0f0"/></svg><div class="b" style="left:1125px;top:440px;width:225px;height:269px;background:#464646;"></div><div class="b" style="left:1125px;top:441px;width:225px;height:40px;background:#596679;"></div><div class="b" style="left:1350px;top:440px;width:15px;height:269px;background:linear-gradient(90deg,#343434,#404040 40%,#484848);"></div><div class="b" style="left:1125px;top:709px;width:240px;height:1px;background:#363636;"></div><div class="b" style="left:1125px;top:710px;width:240px;height:18px;background:#535353;"></div><div class="b" style="left:1125px;top:710px;width:240px;height:1px;background:#5c5c5c;"></div><svg class="b" style="left:1161px;top:714px;" width="16" height="9" viewBox="0 0 16 9"><rect x="1" y="1.500" width="8" height="6" rx="3" fill="none" stroke="#9a9a9a" stroke-width="1.400"/><rect x="7" y="1.500" width="8" height="6" rx="3" fill="none" stroke="#9a9a9a" stroke-width="1.400"/></svg><div class="t" style="left:1190.500px;top:710.500px;font:italic 14.500px 'Liberation Sans',sans-serif;color:#d0d0d0;line-height:15px;letter-spacing:-.6px">fx</div><svg class="b" style="left:1204px;top:722px;" width="4" height="3" viewBox="0 0 4 3"><path d="M0 0h4L2 3z" fill="#ccc"/></svg><div class="b" style="left:1217px;top:713px;width:13px;height:10px;background:#c0c0c0;"></div><div class="b" style="left:1221px;top:716px;width:5px;height:5px;background:#4a4a4a;border-radius:50%"></div><svg class="b" style="left:1244px;top:712px;" width="16" height="13" viewBox="0 0 16 13"><circle cx="6" cy="6" r="5" fill="#c8c8c8"/><path d="M2.500 9.500A5 5 0 0 0 9.500 2.500z" fill="#535353"/><circle cx="6" cy="6" r="5" fill="none" stroke="#c8c8c8" stroke-width="1.200"/><path d="M12 10h4l-2 3z" fill="#ccc"/></svg><svg class="b" style="left:1270px;top:712px;" width="14" height="11" viewBox="0 0 14 11"><path d="M0 1.500h5l1.500 1.500H13V11H0z" fill="#c4c4c4"/></svg><svg class="b" style="left:1298px;top:713px;" width="13" height="11" viewBox="0 0 13 11"><path d="M0 0h12v11H4.500V4.500H0z" fill="#c4c4c4"/><path d="M0 5.500h3.500V9z" fill="#c4c4c4"/></svg><svg class="b" style="left:1325px;top:712px;" width="12" height="13" viewBox="0 0 12 13"><path d="M1.500 3.500h9l-1 9h-7zM0 2h12v1H0zM4 .5h4v1.500H4z" fill="none" stroke="#8a8a8a" stroke-width="1"/><path d="M4.500 5v6M6 5v6M7.500 5v6" stroke="#8a8a8a" stroke-width=".8"/></svg><div class="b" style="left:1125px;top:625px;width:40px;height:39px;background:#2b9fc5;"></div><div class="b" style="left:1125px;top:660px;width:40px;height:4px;background:#8cc24a;"></div><div class="b" style="left:1165px;top:625px;width:40px;height:39px;background:#8bc24a;"></div><div class="b" style="left:1165px;top:625px;width:40px;height:4px;background:#66ac1e;"></div><div class="b" style="left:1205px;top:625px;width:75px;height:39px;background:#e98f1a;"></div><div class="t" style="left:1133.5px;top:630px;font-size:13.5px;line-height:13.5px;color:#f4f6f8;"><span class="l" style="width:23.50px"><span style="transform:scaleX(0.824)">CPU</span></span></div><div class="t" style="left:1136.5px;top:647px;font-size:13.5px;line-height:13.5px;color:#f4f6f8;"><span class="l" style="width:18.00px"><span style="transform:scaleX(0.923)">9%</span></span></div><div class="t" style="left:1172.5px;top:630px;font-size:13.5px;line-height:13.5px;color:#f4ffe0;"><span class="l" style="width:25.00px"><span style="transform:scaleX(0.926)">内存</span></span></div><div class="t" style="left:1172px;top:647px;font-size:13.5px;line-height:13.5px;color:#f4ffe0;"><span class="l" style="width:25.00px"><span style="transform:scaleX(0.925)">85%</span></span></div><svg class="b" style="left:1207px;top:630px;" width="10" height="12" viewBox="0 0 10 12"><path d="M5 0l4.500 5H6.500v7h-3V5H.5z" fill="#fff"/></svg><svg class="b" style="left:1207px;top:647px;" width="10" height="12" viewBox="0 0 10 12"><path d="M5 12l4.500-5H6.500V0h-3v7H.5z" fill="#fff"/></svg><div class="t" style="left:1244px;top:630px;font-size:13.5px;line-height:13.5px;color:#f4f6f8;"><span class="l" style="width:30.50px"><span style="transform:scaleX(0.924)">0&nbsp;K/S</span></span></div><div class="t" style="left:1244px;top:647px;font-size:13.5px;line-height:13.5px;color:#f4f6f8;"><span class="l" style="width:30.50px"><span style="transform:scaleX(0.924)">0&nbsp;K/S</span></span></div>
<!-- s_grad -->
<div class="b" style="left:74px;top:54px;width:243px;height:309px;background:#5e5e5e;box-shadow:1px 1px 0 #303030,inset 1px 1px 0 #6c6c6c"></div><div class="b" style="left:91px;top:72px;width:157px;height:24px;background:linear-gradient(#6e6e6e,#5a5a5a);border:1px solid #2e2e2e;border-radius:3px;box-sizing:border-box;box-shadow:0 1px 0 #6a6a6a"></div><div class="b" style="left:170px;top:73px;width:39px;height:22px;background:#3a3a3a;"></div><div class="b" style="left:130px;top:73px;width:1px;height:22px;background:#2e2e2e;"></div><div class="b" style="left:169px;top:73px;width:1px;height:22px;background:#2e2e2e;"></div><div class="b" style="left:208px;top:73px;width:1px;height:22px;background:#2e2e2e;"></div><div class="b" style="left:102px;top:76px;width:18px;height:15px;background:linear-gradient(180deg,#dcdcdc,#bcbcbc);border:1px solid #8a8a8a;border-top-color:#2a2a2a;box-sizing:border-box"></div><svg class="b" style="left:102px;top:77px;" width="18" height="14" viewBox="0 0 18 14"><path d="M3 12L15 2" stroke="#e8262a" stroke-width="1.600"/></svg><div class="b" style="left:141px;top:77px;width:18px;height:14px;background:#000;border:1px solid #b0b0b0;box-sizing:border-box"></div><div class="b" style="left:180px;top:77px;width:18px;height:14px;background:linear-gradient(90deg,#1a1a1a,#d8d8d8);border:1px solid #a0a0a0;box-sizing:border-box;box-shadow:0 0 0 1px #555"></div><div class="b" style="left:219px;top:77px;width:18px;height:14px;background:repeating-linear-gradient(135deg,#fff 0 2px,#000 2px 4.500px);border:1px solid #a0a0a0;box-sizing:border-box"></div><div class="b" style="left:280px;top:76px;width:20px;height:16px;background:radial-gradient(ellipse 70% 80% at 50% 85%,#fff 0,rgba(255,255,255,.6) 40%,rgba(255,255,255,0) 100%),conic-gradient(from 270deg at 50% 60%,#2a50ff 0,#20d8c0 12%,#40f050 25%,#f0f020 37%,#ff3020 50%,#ff40c0 62%,#d080ff 75%,#4868ff 90%,#2a50ff);border:1px solid #fff;box-sizing:border-box"></div><div class="b" style="left:75px;top:105px;width:242px;height:1px;background:#3c3c3c;"></div><div class="b" style="left:75px;top:106px;width:242px;height:1px;background:#686868;"></div><div class="t" style="left:92px;top:116px;font-size:12.5px;line-height:12.5px;color:#f0f0f0;"><span class="l" style="width:23.50px"><span style="transform:scaleX(0.940)">渐变</span></span></div><svg class="b" style="left:285px;top:116px;" width="12" height="12" viewBox="0 0 12 12"><rect x="5" y="0" width="2" height="3" transform="rotate(0 6 6)" fill="#d0d0d0"/><rect x="5" y="0" width="2" height="3" transform="rotate(45 6 6)" fill="#d0d0d0"/><rect x="5" y="0" width="2" height="3" transform="rotate(90 6 6)" fill="#d0d0d0"/><rect x="5" y="0" width="2" height="3" transform="rotate(135 6 6)" fill="#d0d0d0"/><rect x="5" y="0" width="2" height="3" transform="rotate(180 6 6)" fill="#d0d0d0"/><rect x="5" y="0" width="2" height="3" transform="rotate(225 6 6)" fill="#d0d0d0"/><rect x="5" y="0" width="2" height="3" transform="rotate(270 6 6)" fill="#d0d0d0"/><rect x="5" y="0" width="2" height="3" transform="rotate(315 6 6)" fill="#d0d0d0"/><circle cx="6" cy="6" r="3.200" fill="none" stroke="#d0d0d0" stroke-width="1.700"/></svg><svg class="b" style="left:298px;top:124px;" width="4" height="3" viewBox="0 0 4 3"><path d="M0 0h4L2 2.500z" fill="#9a9a9a"/></svg><div class="b" style="left:90px;top:135px;width:211px;height:67px;background:#3e3e3e;border:1px solid #333;box-sizing:border-box"></div><div class="b" style="left:252px;top:170px;width:32px;height:31px;background:#464646;"></div><div class="b" style="left:92px;top:138px;width:31px;height:31px;background:linear-gradient(to bottom right,#0a00b2 18%,#fffc00 50%,#0a00b2 82%);"></div><div class="b" style="left:124px;top:138px;width:31px;height:31px;background:linear-gradient(to bottom right,#ff6e02 10%,#ffff00 50%,#ff6d00 90%);"></div><div class="b" style="left:156px;top:138px;width:31px;height:31px;background:linear-gradient(to bottom right,#6f156c 12%,#00601b 50%,#fd7c00 85%);"></div><div class="b" style="left:188px;top:138px;width:31px;height:31px;background:linear-gradient(to bottom right,#f9e600 12%,#6f156c 40%,#fd7c00 60%,#002874 85%);"></div><div class="b" style="left:220px;top:138px;width:31px;height:31px;background:linear-gradient(to bottom right,#97461a 12%,#fbd8c5 38%,#6c2e16 70%,#efdbcd 92%);"></div><div class="b" style="left:252px;top:138px;width:31px;height:31px;background:linear-gradient(to bottom right,#2989cc 12%,#fff 49.500%,#906a00 50.500%,#d99f00 64%,#fff 88%);"></div><div class="b" style="left:92px;top:170px;width:31px;height:31px;background:linear-gradient(to bottom right,#f00 27%,#f0f 36%,#00f 45%,#0ff 54%,#0f0 63%,#ff0 72%,#f00 81%);"></div><div class="b" style="left:124px;top:170px;width:31px;height:31px;background:linear-gradient(to bottom right,rgba(255,0,0,0) 26%,#f00 33%,#ff0 42%,#0f0 50%,#0ff 58%,#00f 66%,#f0f 74%,rgba(255,0,255,0) 80%),conic-gradient(#ccc 25%,#fff 0 50%,#ccc 0 75%,#fff 0) 0 0/8px 8px;"></div><div class="b" style="left:156px;top:170px;width:31px;height:31px;background:linear-gradient(to bottom right,#000 0 37%,transparent 37% 43%,#000 43% 51%,transparent 51% 57%,#000 57% 65%,transparent 65% 71%,#000 71% 79%,transparent 79%),conic-gradient(#ccc 25%,#fff 0 50%,#ccc 0 75%,#fff 0) 0 0/8px 8px;"></div><div class="b" style="left:188px;top:170px;width:31px;height:31px;background:linear-gradient(to bottom right,rgba(90,90,90,.75) 15%,rgba(120,120,120,0) 85%),conic-gradient(#ccc 25%,#fff 0 50%,#ccc 0 75%,#fff 0) 0 0/8px 8px;"></div><div class="b" style="left:220px;top:170px;width:31px;height:31px;background:linear-gradient(to bottom right,#e9edff 10%,#100a2e 23%,#e9edff 36%,#100a2e 50%,#e9edff 64%,#100a2e 77%,#e9edff 90%);"></div><div class="b" style="left:284px;top:136px;width:16px;height:65px;background:#3e3e3e;"></div><svg class="b" style="left:288px;top:143px;" width="8" height="5" viewBox="0 0 8 5"><path d="M4 .3L7.700 4.500H.3z" fill="#e8e8e8"/></svg><svg class="b" style="left:288px;top:192px;" width="8" height="5" viewBox="0 0 8 5"><path d="M4 4.700L7.700 .5H.3z" fill="#e8e8e8"/></svg><div class="b" style="left:286px;top:166px;width:12px;height:17px;background:linear-gradient(90deg,#8a8a8a,#6e6e6e);border-radius:3px"></div><div class="t" style="left:91.5px;top:211px;font-size:12.5px;line-height:12.5px;color:#f0f0f0;"><span class="l" style="width:49.50px"><span style="transform:scaleX(0.990)">不透明度</span></span></div><div class="t" style="left:142px;top:211px;font-size:12.5px;line-height:12.5px;color:#f0f0f0;"><span class="l" style="width:3.47px"><span style="transform:scaleX(1.000)">:</span></span></div><div class="b" style="left:158px;top:208px;width:45px;height:20px;background:#4e4e4e;border:1px solid #484848;border-radius:3px;box-sizing:border-box"></div><div class="b" style="left:183px;top:209px;width:19px;height:18px;background:#646464;border-radius:0 3px 3px 0"></div><svg class="b" style="left:189px;top:216px;" width="7" height="4" viewBox="0 0 7 4"><path d="M.3 .3h6.400L3.500 3.800z" fill="#8e8e8e"/></svg><div class="t" style="left:213px;top:211px;font-size:12.5px;line-height:12.5px;color:#e8e8e8;"><span class="l" style="width:10.56px"><span style="transform:scaleX(0.950)">%</span></span></div><svg class="b" style="left:92px;top:233px;" width="12" height="17" viewBox="0 0 12 17"><path d="M.5 .5h11v10L6 16 .5 10.500z" fill="#6a6a6a" stroke="#2c2c2c"/><rect x="2.500" y="2.500" width="7" height="7" fill="#000"/></svg><svg class="b" style="left:287px;top:233px;" width="12" height="17" viewBox="0 0 12 17"><path d="M.5 .5h11v10L6 16 .5 10.500z" fill="#6a6a6a" stroke="#2c2c2c"/><rect x="2.500" y="2.500" width="7" height="7" fill="#000"/></svg><div class="b" style="left:96px;top:251px;width:198px;height:22px;background:linear-gradient(90deg,#e9edff 0.00%,#e0e3f6 2.17%,#c7cade 4.35%,#a4a5bd 6.53%,#7c7c96 8.70%,#555270 10.87%,#322d4f 13.05%,#191437 15.22%,#100a2e 17.40%,#191437 19.46%,#322d4f 21.52%,#555270 23.59%,#7c7c96 25.65%,#a4a5bd 27.71%,#c7cade 29.78%,#e0e3f6 31.84%,#e9edff 33.90%,#e0e3f6 36.00%,#c7cade 38.10%,#a4a5bd 40.20%,#7c7c96 42.30%,#555270 44.40%,#322d4f 46.50%,#191437 48.60%,#100a2e 50.70%,#191437 52.85%,#322d4f 55.00%,#555270 57.15%,#7c7c96 59.30%,#a4a5bd 61.45%,#c7cade 63.60%,#e0e3f6 65.75%,#e9edff 67.90%,#e0e3f6 69.98%,#c7cade 72.05%,#a4a5bd 74.12%,#7c7c96 76.20%,#555270 78.28%,#322d4f 80.35%,#191437 82.42%,#100a2e 84.50%,#191437 86.44%,#322d4f 88.38%,#555270 90.31%,#7c7c96 92.25%,#a4a5bd 94.19%,#c7cade 96.12%,#e0e3f6 98.06%,#e9edff 100.00%);border:1px solid #2a2a2a;box-sizing:border-box"></div><svg class="b" style="left:91px;top:275px;" width="12" height="17" viewBox="0 0 12 17"><path d="M6 .5L11.500 6.500V16.500H.5V6.500z" fill="#6a6a6a" stroke="#2c2c2c"/><path d="M6 1.200L10.800 6.300H1.200z" fill="#111"/><rect x="2.500" y="8" width="7" height="6.500" fill="#e9edff" stroke="#d8d8d8" stroke-width=".6"/></svg><svg class="b" style="left:125px;top:275px;" width="12" height="17" viewBox="0 0 12 17"><path d="M6 .5L11.500 6.500V16.500H.5V6.500z" fill="#6a6a6a" stroke="#2c2c2c"/><path d="M6 1.200L10.800 6.300H1.200z" fill="#6a6a6a"/><rect x="2.500" y="8" width="7" height="6.500" fill="#100a2e" stroke="#d8d8d8" stroke-width=".6"/></svg><svg class="b" style="left:157px;top:275px;" width="12" height="17" viewBox="0 0 12 17"><path d="M6 .5L11.500 6.500V16.500H.5V6.500z" fill="#6a6a6a" stroke="#2c2c2c"/><path d="M6 1.200L10.800 6.300H1.200z" fill="#6a6a6a"/><rect x="2.500" y="8" width="7" height="6.500" fill="#e9edff" stroke="#d8d8d8" stroke-width=".6"/></svg><svg class="b" style="left:190px;top:275px;" width="12" height="17" viewBox="0 0 12 17"><path d="M6 .5L11.500 6.500V16.500H.5V6.500z" fill="#6a6a6a" stroke="#2c2c2c"/><path d="M6 1.200L10.800 6.300H1.200z" fill="#6a6a6a"/><rect x="2.500" y="8" width="7" height="6.500" fill="#100a2e" stroke="#d8d8d8" stroke-width=".6"/></svg><svg class="b" style="left:224px;top:275px;" width="12" height="17" viewBox="0 0 12 17"><path d="M6 .5L11.500 6.500V16.500H.5V6.500z" fill="#6a6a6a" stroke="#2c2c2c"/><path d="M6 1.200L10.800 6.300H1.200z" fill="#6a6a6a"/><rect x="2.500" y="8" width="7" height="6.500" fill="#e9edff" stroke="#d8d8d8" stroke-width=".6"/></svg><svg class="b" style="left:257px;top:275px;" width="12" height="17" viewBox="0 0 12 17"><path d="M6 .5L11.500 6.500V16.500H.5V6.500z" fill="#6a6a6a" stroke="#2c2c2c"/><path d="M6 1.200L10.800 6.300H1.200z" fill="#6a6a6a"/><rect x="2.500" y="8" width="7" height="6.500" fill="#100a2e" stroke="#d8d8d8" stroke-width=".6"/></svg><svg class="b" style="left:286px;top:275px;" width="12" height="17" viewBox="0 0 12 17"><path d="M6 .5L11.500 6.500V16.500H.5V6.500z" fill="#6a6a6a" stroke="#2c2c2c"/><path d="M6 1.200L10.800 6.300H1.200z" fill="#6a6a6a"/><rect x="2.500" y="8" width="7" height="6.500" fill="#e9edff" stroke="#d8d8d8" stroke-width=".6"/></svg><svg class="b" style="left:111px;top:275px;" width="7" height="7" viewBox="0 0 7 7"><path d="M3.500 .6L6.400 3.500 3.500 6.400 .6 3.500z" fill="#555" stroke="#111" stroke-width=".9"/></svg><div class="b" style="left:91px;top:298px;width:106px;height:21px;background:linear-gradient(#6e6e6e,#5a5a5a);border:1px solid #333;border-radius:3px;box-sizing:border-box;box-shadow:0 1px 0 #6a6a6a"></div><div class="b" style="left:100px;top:302px;width:12px;height:12px;background:linear-gradient(135deg,#000 10%,#fff 90%);border:1px solid #ddd;box-sizing:border-box"></div><svg class="b" style="left:100px;top:302px;" width="12" height="12" viewBox="0 0 12 12"><path d="M1 1h10L1 11z" fill="#111"/><path d="M11 1v10H1z" fill="url(#agr)"/><defs><linearGradient id="agr" x1="0" y1="0" x2="1" y2="1"><stop offset=".3" stop-color="#555"/><stop offset="1" stop-color="#fff"/></linearGradient></defs><rect x=".5" y=".5" width="11" height="11" fill="none" stroke="#ddd"/></svg><div class="t" style="left:116.5px;top:302.5px;font-size:12.5px;line-height:12.5px;color:#f4f4f4;"><span class="l" style="width:23.50px"><span style="transform:scaleX(0.940)">角度</span></span></div><svg class="b" style="left:185px;top:303px;" width="8" height="12" viewBox="0 0 8 12"><path d="M4 .5L7.500 4.500H.5zM4 11.500L7.500 7.500H.5z" fill="#e8e8e8"/></svg><div class="b" style="left:203px;top:299px;width:40px;height:19px;background:#3a3a3a;border:1px solid #333;box-sizing:border-box;box-shadow:0 1px 0 #6a6a6a"></div><div class="t" style="left:205.5px;top:302.5px;font-size:12.5px;line-height:12.5px;color:#f4f4f4;"><span class="l" style="width:12.50px"><span style="transform:scaleX(0.899)">90</span></span></div><div class="b" style="left:249px;top:297px;width:23px;height:23px;background:linear-gradient(#757575,#5c5c5c);border:1px solid #2e2e2e;border-radius:50%;box-sizing:border-box;box-shadow:0 1px 0 #6a6a6a"></div><div class="b" style="left:260px;top:299px;width:1px;height:9px;background:#e0e0e0;"></div><div class="b" style="left:259px;top:307px;width:3px;height:3px;background:#fff;border-radius:50%"></div><svg class="b" style="left:281px;top:300px;" width="17" height="15" viewBox="0 0 17 15"><rect x="1.500" y=".5" width="9" height="6" fill="url(#rv1)" stroke="#d0d0d0"/><rect x="6.500" y="8.500" width="9" height="6" fill="url(#rv2)" stroke="#d0d0d0"/><path d="M12 2h5l-2.500 3zM0 13h5L2.500 10z" fill="#d8d8d8"/><defs><linearGradient id="rv1"><stop offset="0" stop-color="#333"/><stop offset="1" stop-color="#aaa"/></linearGradient><linearGradient id="rv2"><stop offset="0" stop-color="#aaa"/><stop offset="1" stop-color="#333"/></linearGradient></defs></svg><div class="t" style="left:94px;top:329.5px;font-size:12.5px;line-height:12.5px;color:#f0f0f0;"><span class="l" style="width:22.50px"><span style="transform:scaleX(0.900)">缩放</span></span></div><div class="t" style="left:118px;top:329.5px;font-size:12.5px;line-height:12.5px;color:#f0f0f0;"><span class="l" style="width:3.47px"><span style="transform:scaleX(1.000)">:</span></span></div><div class="b" style="left:129px;top:326px;width:51px;height:20px;background:#3a3a3a;border:1px solid #333;border-radius:3px;box-sizing:border-box;box-shadow:0 1px 0 #6a6a6a"></div><div class="b" style="left:159px;top:327px;width:20px;height:18px;background:linear-gradient(#6a6a6a,#5a5a5a);border-radius:0 2px 2px 0"></div><div class="t" style="left:132.5px;top:330px;font-size:12.5px;line-height:12.5px;color:#f4f4f4;"><span class="l" style="width:17.50px"><span style="transform:scaleX(0.839)">100</span></span></div><svg class="b" style="left:165px;top:334px;" width="7" height="4" viewBox="0 0 7 4"><path d="M.3 .3h6.400L3.500 3.800z" fill="#f0f0f0"/></svg><div class="t" style="left:186.5px;top:329.5px;font-size:12.5px;line-height:12.5px;color:#e8e8e8;"><span class="l" style="width:10.56px"><span style="transform:scaleX(0.950)">%</span></span></div><div class="b" style="left:206px;top:329px;width:14px;height:14px;background:linear-gradient(#7c7c7c,#606060);border:1px solid #333;border-radius:2px;box-sizing:border-box"></div><svg class="b" style="left:206px;top:327px;" width="16" height="16" viewBox="0 0 16 16"><path d="M3.500 9l3 4l6-10" fill="none" stroke="#ececec" stroke-width="1.800"/></svg><div class="t" style="left:226px;top:329.5px;font-size:12.5px;line-height:12.5px;color:#f0f0f0;"><span class="l" style="width:59.00px"><span style="transform:scaleX(0.944)">与图层对齐</span></span></div><div class="b" style="left:313px;top:353px;width:2px;height:2px;background:#c4c4c4;"></div><div class="b" style="left:310px;top:356px;width:2px;height:2px;background:#c4c4c4;"></div><div class="b" style="left:313px;top:356px;width:2px;height:2px;background:#c4c4c4;"></div><div class="b" style="left:307px;top:359px;width:2px;height:2px;background:#c4c4c4;"></div><div class="b" style="left:310px;top:359px;width:2px;height:2px;background:#c4c4c4;"></div><div class="b" style="left:313px;top:359px;width:2px;height:2px;background:#c4c4c4;"></div>
<!-- s_dialog -->
<div class="b" style="left:771px;top:171px;width:561px;height:350px;background:#ededed;box-shadow:0 0 0 1px rgba(90,90,90,.55),0 3px 12px 1px rgba(0,0,0,.45)"></div><div class="b" style="left:771px;top:171px;width:561px;height:25px;background:#fff;"></div><div class="t" style="left:773px;top:176px;font-size:12.5px;line-height:12.5px;color:#9c9c9c;"><span class="l" style="width:37.35px"><span style="transform:scaleX(0.996)">拾色器</span></span><span class="l" style="width:11.11px"><span style="transform:scaleX(1.000)">&nbsp;(&nbsp;</span></span><span class="l" style="width:24.90px"><span style="transform:scaleX(0.996)">色标</span></span><span class="l" style="width:7.64px"><span style="transform:scaleX(1.000)">&nbsp;)</span></span></div><svg class="b" style="left:1311px;top:177px;" width="12" height="12" viewBox="0 0 12 12"><path d="M1 1l10 10M11 1L1 11" stroke="#7a7a7a" stroke-width="1.100"/></svg><div class="b" style="left:781px;top:226px;width:260px;height:259px;background:#a8a8a8;"></div><div class="b" style="left:783px;top:228px;width:256px;height:256px;background:linear-gradient(to top,#000,rgba(0,0,0,0)),linear-gradient(to right,#fff,rgba(255,255,255,0)),#002fff;"></div><div class="b" style="left:783px;top:228px;width:256px;height:20px;overflow:hidden"><div style="position:absolute;left:16.300px;top:-6.300px;width:12.600px;height:12.600px;border:1.700px solid #2e2e2e;border-radius:50%;box-sizing:border-box"></div></div><div class="b" style="left:1051px;top:226px;width:23px;height:259px;background:#a8a8a8;"></div><div class="b" style="left:1053px;top:228px;width:19px;height:256px;background:linear-gradient(to bottom,#f00,#f0f 16.670%,#00f 33.330%,#0ff 50%,#0f0 66.670%,#ff0 83.330%,#f00);"></div><svg class="b" style="left:1042px;top:317px;" width="8" height="10" viewBox="0 0 8 10"><path d="M.6 .6h3.400L7.400 5 4 9.400H.6z" fill="#fff" stroke="#444" stroke-width=".9"/></svg><svg class="b" style="left:1074px;top:317px;" width="8" height="10" viewBox="0 0 8 10"><path d="M7.400 .6H4L.6 5 4 9.400h3.400z" fill="#fff" stroke="#444" stroke-width=".9"/></svg><div class="t" style="left:1102px;top:215px;font-size:12.5px;line-height:12.5px;color:#000;"><span class="l" style="width:24.00px"><span style="transform:scaleX(0.960)">新的</span></span></div><div class="b" style="left:1086px;top:231px;width:60.5px;height:68.5px;background:#e9edff;border:1px solid #000;box-sizing:border-box"></div><div class="t" style="left:1102px;top:302.8px;font-size:12.5px;line-height:12.5px;color:#000;"><span class="l" style="width:24.00px"><span style="transform:scaleX(0.960)">当前</span></span></div><svg class="b" style="left:1155px;top:269px;" width="13" height="13" viewBox="0 0 13 13"><path d="M6.500 .7l5.300 2.500v6L6.500 12.300 1.200 9.200v-6z" fill="#a0a0a0" stroke="#555" stroke-width=".9"/><path d="M1.200 3.200l5.300 2.600 5.300-2.600M6.500 5.800v6.500" fill="none" stroke="#555" stroke-width=".9"/><path d="M6.500 .7l5.300 2.500-5.300 2.600-5.300-2.600z" fill="#c8c8c8" stroke="#555" stroke-width=".9"/></svg><div class="b" style="left:1155px;top:284px;width:14px;height:14px;background:#fff;border:1px solid #8a8a8a;box-sizing:border-box"></div><div class="b" style="left:1207px;top:207px;width:113px;height:18px;background:#e1e1e1;border:2px solid #0078d7;box-sizing:border-box"></div><div class="t" style="left:1250.7px;top:210.5px;font-size:12.5px;line-height:12.5px;color:#000;"><span class="l" style="width:24.00px"><span style="transform:scaleX(0.960)">确定</span></span></div><div class="b" style="left:1207px;top:235px;width:113px;height:18px;background:#e1e1e1;border:1px solid #adadad;box-sizing:border-box"></div><div class="t" style="left:1250.7px;top:238.5px;font-size:12.5px;line-height:12.5px;color:#000;"><span class="l" style="width:24.00px"><span style="transform:scaleX(0.960)">取消</span></span></div><div class="b" style="left:1207px;top:270px;width:113px;height:18px;background:#e1e1e1;border:1px solid #adadad;box-sizing:border-box"></div><div class="t" style="left:1232.7px;top:273.5px;font-size:12.5px;line-height:12.5px;color:#000;"><span class="l" style="width:60.00px"><span style="transform:scaleX(0.960)">添加到色板</span></span></div><div class="b" style="left:1207px;top:305px;width:113px;height:18px;background:#e1e1e1;border:1px solid #adadad;box-sizing:border-box"></div><div class="t" style="left:1244.7px;top:308.5px;font-size:12.5px;line-height:12.5px;color:#000;"><span class="l" style="width:36.00px"><span style="transform:scaleX(0.960)">颜色库</span></span></div><div class="b" style="left:1085px;top:341.5px;width:13px;height:13px;background:#fff;border:1px solid #333;border-radius:50%;box-sizing:border-box"></div><div class="b" style="left:1088px;top:344.5px;width:7px;height:7px;background:#222;border-radius:50%"></div><div class="t" style="left:1100.5px;top:342.5px;font-size:12.5px;line-height:12.5px;color:#000;"><span class="l" style="width:11.25px"><span style="transform:scaleX(0.900)">H:</span></span></div><div class="b" style="left:1126px;top:338px;width:45px;height:20px;background:#fff;border:1px solid #7a7a7a;box-sizing:border-box"></div><div class="t" style="left:1130.8px;top:343px;font-size:12.5px;line-height:12.5px;color:#000;"><span class="l" style="width:20.23px"><span style="transform:scaleX(0.970)">229</span></span></div><div class="t" style="left:1173.5px;top:342.5px;font-size:12.5px;line-height:12.5px;color:#000;"><span class="l" style="width:12.50px"><span style="transform:scaleX(1.000)">度</span></span></div><div class="b" style="left:1085px;top:366px;width:13px;height:13px;background:#fff;border:1px solid #333;border-radius:50%;box-sizing:border-box"></div><div class="t" style="left:1100.5px;top:367px;font-size:12.5px;line-height:12.5px;color:#000;"><span class="l" style="width:10.63px"><span style="transform:scaleX(0.900)">S:</span></span></div><div class="b" style="left:1126px;top:362.5px;width:45px;height:20px;background:#fff;border:1px solid #7a7a7a;box-sizing:border-box"></div><div class="t" style="left:1130.8px;top:367.5px;font-size:12.5px;line-height:12.5px;color:#000;"><span class="l" style="width:6.74px"><span style="transform:scaleX(0.970)">9</span></span></div><div class="t" style="left:1175px;top:367px;font-size:12.5px;line-height:12.5px;color:#000;"><span class="l" style="width:10.56px"><span style="transform:scaleX(0.950)">%</span></span></div><div class="b" style="left:1085px;top:390px;width:13px;height:13px;background:#fff;border:1px solid #333;border-radius:50%;box-sizing:border-box"></div><div class="t" style="left:1100.5px;top:391px;font-size:12.5px;line-height:12.5px;color:#000;"><span class="l" style="width:10.63px"><span style="transform:scaleX(0.900)">B:</span></span></div><div class="b" style="left:1126px;top:386.5px;width:45px;height:20px;background:#fff;border:1px solid #7a7a7a;box-sizing:border-box"></div><div class="t" style="left:1130.8px;top:391.5px;font-size:12.5px;line-height:12.5px;color:#000;"><span class="l" style="width:20.23px"><span style="transform:scaleX(0.970)">100</span></span></div><div class="t" style="left:1175px;top:391px;font-size:12.5px;line-height:12.5px;color:#000;"><span class="l" style="width:10.56px"><span style="transform:scaleX(0.950)">%</span></span></div><div class="b" style="left:1085px;top:418px;width:13px;height:13px;background:#fff;border:1px solid #333;border-radius:50%;box-sizing:border-box"></div><div class="t" style="left:1100.5px;top:419px;font-size:12.5px;line-height:12.5px;color:#000;"><span class="l" style="width:11.25px"><span style="transform:scaleX(0.900)">R:</span></span></div><div class="b" style="left:1126px;top:414.5px;width:45px;height:20px;background:#fff;border:1px solid #7a7a7a;box-sizing:border-box"></div><div class="t" style="left:1130.8px;top:419.5px;font-size:12.5px;line-height:12.5px;color:#000;"><span class="l" style="width:20.23px"><span style="transform:scaleX(0.970)">233</span></span></div><div class="b" style="left:1085px;top:442px;width:13px;height:13px;background:#fff;border:1px solid #333;border-radius:50%;box-sizing:border-box"></div><div class="t" style="left:1100.5px;top:443px;font-size:12.5px;line-height:12.5px;color:#000;"><span class="l" style="width:11.88px"><span style="transform:scaleX(0.900)">G:</span></span></div><div class="b" style="left:1126px;top:438.5px;width:45px;height:20px;background:#fff;border:1px solid #7a7a7a;box-sizing:border-box"></div><div class="t" style="left:1130.8px;top:443.5px;font-size:12.5px;line-height:12.5px;color:#000;"><span class="l" style="width:20.23px"><span style="transform:scaleX(0.970)">237</span></span></div><div class="b" style="left:1085px;top:466px;width:13px;height:13px;background:#fff;border:1px solid #333;border-radius:50%;box-sizing:border-box"></div><div class="t" style="left:1100.5px;top:467px;font-size:12.5px;line-height:12.5px;color:#000;"><span class="l" style="width:10.63px"><span style="transform:scaleX(0.900)">B:</span></span></div><div class="b" style="left:1126px;top:462.5px;width:45px;height:20px;background:#fff;border:1px solid #7a7a7a;box-sizing:border-box"></div><div class="t" style="left:1130.8px;top:467.5px;font-size:12.5px;line-height:12.5px;color:#000;"><span class="l" style="width:20.23px"><span style="transform:scaleX(0.970)">255</span></span></div><div class="b" style="left:1221px;top:341.5px;width:13px;height:13px;background:#fff;border:1px solid #333;border-radius:50%;box-sizing:border-box"></div><div class="t" style="left:1236.5px;top:342.5px;font-size:12.5px;line-height:12.5px;color:#000;"><span class="l" style="width:9.38px"><span style="transform:scaleX(0.900)">L:</span></span></div><div class="b" style="left:1260px;top:338px;width:56px;height:20px;background:#fff;border:1px solid #7a7a7a;box-sizing:border-box"></div><div class="t" style="left:1264.8px;top:343px;font-size:12.5px;line-height:12.5px;color:#000;"><span class="l" style="width:13.49px"><span style="transform:scaleX(0.970)">94</span></span></div><div class="b" style="left:1221px;top:366px;width:13px;height:13px;background:#fff;border:1px solid #333;border-radius:50%;box-sizing:border-box"></div><div class="t" style="left:1236.5px;top:367px;font-size:12.5px;line-height:12.5px;color:#000;"><span class="l" style="width:9.38px"><span style="transform:scaleX(0.900)">a:</span></span></div><div class="b" style="left:1260px;top:362.5px;width:56px;height:20px;background:#fff;border:1px solid #7a7a7a;box-sizing:border-box"></div><div class="t" style="left:1264.8px;top:367.5px;font-size:12.5px;line-height:12.5px;color:#000;"><span class="l" style="width:6.74px"><span style="transform:scaleX(0.970)">1</span></span></div><div class="b" style="left:1221px;top:390px;width:13px;height:13px;background:#fff;border:1px solid #333;border-radius:50%;box-sizing:border-box"></div><div class="t" style="left:1236.5px;top:391px;font-size:12.5px;line-height:12.5px;color:#000;"><span class="l" style="width:9.38px"><span style="transform:scaleX(0.900)">b:</span></span></div><div class="b" style="left:1260px;top:386.5px;width:56px;height:20px;background:#fff;border:1px solid #7a7a7a;box-sizing:border-box"></div><div class="t" style="left:1264.8px;top:391.5px;font-size:12.5px;line-height:12.5px;color:#000;"><span class="l" style="width:10.78px"><span style="transform:scaleX(0.970)">-9</span></span></div><div class="t" style="right:110px;top:419px;font-size:12.5px;line-height:12.5px;color:#000;"><span class="l" style="width:11.88px"><span style="transform:scaleX(0.950)">C:</span></span></div><div class="b" style="left:1260px;top:414.5px;width:45px;height:20px;background:#fff;border:1px solid #7a7a7a;box-sizing:border-box"></div><div class="t" style="left:1264.8px;top:419.5px;font-size:12.5px;line-height:12.5px;color:#000;"><span class="l" style="width:13.49px"><span style="transform:scaleX(0.970)">11</span></span></div><div class="t" style="left:1309px;top:419px;font-size:12.5px;line-height:12.5px;color:#000;"><span class="l" style="width:10.56px"><span style="transform:scaleX(0.950)">%</span></span></div><div class="t" style="right:110px;top:443px;font-size:12.5px;line-height:12.5px;color:#000;"><span class="l" style="width:13.19px"><span style="transform:scaleX(0.950)">M:</span></span></div><div class="b" style="left:1260px;top:438.5px;width:45px;height:20px;background:#fff;border:1px solid #7a7a7a;box-sizing:border-box"></div><div class="t" style="left:1264.8px;top:443.5px;font-size:12.5px;line-height:12.5px;color:#000;"><span class="l" style="width:6.74px"><span style="transform:scaleX(0.970)">7</span></span></div><div class="t" style="left:1309px;top:443px;font-size:12.5px;line-height:12.5px;color:#000;"><span class="l" style="width:10.56px"><span style="transform:scaleX(0.950)">%</span></span></div><div class="t" style="right:110px;top:467px;font-size:12.5px;line-height:12.5px;color:#000;"><span class="l" style="width:11.22px"><span style="transform:scaleX(0.950)">Y:</span></span></div><div class="b" style="left:1260px;top:462.5px;width:45px;height:20px;background:#fff;border:1px solid #7a7a7a;box-sizing:border-box"></div><div class="t" style="left:1264.8px;top:467.5px;font-size:12.5px;line-height:12.5px;color:#000;"><span class="l" style="width:6.74px"><span style="transform:scaleX(0.970)">0</span></span></div><div class="t" style="left:1309px;top:467px;font-size:12.5px;line-height:12.5px;color:#000;"><span class="l" style="width:10.56px"><span style="transform:scaleX(0.950)">%</span></span></div><div class="t" style="right:110px;top:491px;font-size:12.5px;line-height:12.5px;color:#000;"><span class="l" style="width:11.22px"><span style="transform:scaleX(0.950)">K:</span></span></div><div class="b" style="left:1260px;top:486.5px;width:45px;height:20px;background:#fff;border:1px solid #7a7a7a;box-sizing:border-box"></div><div class="t" style="left:1264.8px;top:491.5px;font-size:12.5px;line-height:12.5px;color:#000;"><span class="l" style="width:6.74px"><span style="transform:scaleX(0.970)">0</span></span></div><div class="t" style="left:1309px;top:491px;font-size:12.5px;line-height:12.5px;color:#000;"><span class="l" style="width:10.56px"><span style="transform:scaleX(0.950)">%</span></span></div><div class="t" style="left:1090px;top:494.5px;font-size:12.5px;line-height:12.5px;color:#000;"><span class="l" style="width:6.60px"><span style="transform:scaleX(0.950)">#</span></span></div><div class="b" style="left:1102px;top:491px;width:110px;height:20px;background:#fff;border:1px solid #7a7a7a;box-sizing:border-box"></div><div class="t" style="left:1106.8px;top:496px;font-size:12.5px;line-height:12.5px;color:#000;"><span class="l" style="width:33.71px"><span style="transform:scaleX(0.970)">e9edff</span></span></div><div class="b" style="left:781px;top:494px;width:13px;height:13px;background:#fff;border:1px solid #333;box-sizing:border-box"></div><div class="t" style="left:796px;top:494.5px;font-size:12.5px;line-height:12.5px;color:#000;"><span class="l" style="width:25.49px"><span style="transform:scaleX(1.020)">只有</span></span><span class="l" style="width:31.02px"><span style="transform:scaleX(0.950)">&nbsp;Web&nbsp;</span></span><span class="l" style="width:25.49px"><span style="transform:scaleX(1.020)">颜色</span></span></div>
<!-- s_task -->
<div class="b" style="left:0px;top:728px;width:1366px;height:40px;background:linear-gradient(90deg,#1a403c 0%,#193f3a 40%,#1b423c 65%,#1d453b 100%);"></div><svg class="b" style="left:0;top:728px" width="1366" height="40"><filter id="tn" x="0" y="0" width="100%" height="100%"><feTurbulence type="fractalNoise" baseFrequency="0.016 0.07" numOctaves="4" seed="7"/><feColorMatrix type="matrix" values="0 0 0 0 0.20  0 0 0 0 0.40  0 0 0 0 0.35  0.9 0 0 0 -0.40"/></filter><rect width="1366" height="40" filter="url(#tn)"/></svg><div class="b" style="left:0px;top:727px;width:1366px;height:1px;background:#2a2a2a;"></div><div class="b" style="left:54px;top:766px;width:40px;height:2px;background:#8fded4;"></div><div class="b" style="left:152px;top:766px;width:31px;height:2px;background:#8fded4;"></div><div class="b" style="left:183px;top:766px;width:9px;height:2px;background:#5fa89f;"></div><div class="b" style="left:250px;top:766px;width:31px;height:2px;background:#8fded4;"></div><div class="b" style="left:281px;top:766px;width:9px;height:2px;background:#5fa89f;"></div><div class="b" style="left:299px;top:766px;width:40px;height:2px;background:#8fded4;"></div><div class="b" style="left:348px;top:766px;width:40px;height:2px;background:#8fded4;"></div><svg class="b" style="left:16px;top:739px;" width="17" height="17" viewBox="0 0 17 17"><path d="M0 2.400L7 1.400V8H0zM8 1.250L17 0v8H8zM0 9h7v6.600L0 14.600zM8 9h9v8L8 15.750z" fill="#fff"/></svg><svg class="b" style="left:63px;top:737px;" width="22" height="23" viewBox="0 0 22 23"><path d="M1.200 10.200C2 4.500 6.200.8 11.500.8c6 0 9.700 4.300 9.700 9.700v2.700H7.800c.2 3 2.700 4.700 5.900 4.700 2.300 0 4.300-.6 6.300-1.700v4.400c-2.200 1.200-4.700 1.800-7.500 1.800-6.400 0-10.600-3.800-10.600-9.600 0-3.500 1.800-6.300 4.800-7.800-1.700 1.600-2.300 3.300-2.500 4.600h11c0-2.800-1.500-4.800-4.600-4.800-4 0-7.400 2.300-9.400 5.400z" fill="#0a7ad8"/></svg><svg class="b" style="left:111px;top:736px;" width="25" height="25" viewBox="0 0 25 25"><path d="M17.800.8L24.200 3.400v18.200l-6.400 2.600L7.200 14.600 3 18.200.8 17V8l2.200-1.200 4.200 3.600z" fill="#fff"/><path d="M17.800 2.200l5 2.100v16.400l-5 2.100L7.300 12.900 3.200 16.600l-1.200-.7V9.100l1.200-.7 4.100 3.700zM17.700 8.200L12 12.500l5.700 4.300zM2.900 10.400v4.200l2.300-2.100z" fill="#68217a" fill-rule="evenodd"/></svg><svg class="b" style="left:161px;top:738px;" width="23" height="20" viewBox="0 0 23 20"><path d="M0 1.500h8l1.500 2H22.500v16H0z" fill="#e8b735"/><path d="M0 5h22.500v14.500H0z" fill="#fbd96d"/><path d="M4 11h14.500v8.500H4z" fill="#1e9de3"/><path d="M8 15h6.500v4.500H8z" fill="#fbd96d"/><path d="M1.500 2.500h3v1h-3z" fill="#4aa0e8"/></svg><div class="b" style="left:209px;top:736px;width:24px;height:24px;background:conic-gradient(from 20deg,#f6c945,#f08c3a,#e8524a,#c864c8,#6a8ae8,#46b8e0,#5cc86a,#c8d848,#f6c945);border-radius:50%;border:2px solid #777;box-sizing:border-box;box-shadow:0 0 0 1px #2a2a2a,inset 0 0 0 1px #333"></div><div class="b" style="left:219px;top:746px;width:4px;height:4px;background:#222;border-radius:50%"></div><svg class="b" style="left:257px;top:735px;" width="27" height="27" viewBox="0 0 27 27"><path d="M4.500 14.300C5 9 8.800 5.800 13.800 5.800c5.400 0 8.800 3.900 8.800 8.800v2.200H10.700c.2 2.600 2.300 4 5 4 2 0 3.600-.5 5.300-1.400v3.600c-1.900 1-4 1.500-6.300 1.500C9 24.500 5.300 21.300 5.300 16.200c0-.7.1-1.300.2-1.900zm6.200-.6h7.200c0-2.400-1.300-4-3.500-4-2.100 0-3.500 1.500-3.700 4z" fill="#3eb4f0" fill-rule="evenodd"/><path d="M22.500 3.200C20 1.400 13 4 7.500 10.500 2.500 16.500 1 22.500 3.500 24.500c1.500 1 4 .3 6.500-1.500-3 1.300-4.800 1-5.200-.3C4 20 6.500 15 10 11c4.500-5 9.500-7.500 11.500-6.500 1 .5 1 2 .3 3.800 1.500-2.300 1.800-4.200.7-5.100z" fill="#f5c518"/></svg><div class="b" style="left:307px;top:736px;width:24px;height:24px;background:linear-gradient(#e8221e,#c41410);border-radius:4px"></div><svg class="b" style="left:307px;top:736px;" width="24" height="24" viewBox="0 0 24 24"><circle cx="12" cy="13" r="7" fill="none" stroke="#fff" stroke-width="1.700"/><circle cx="12" cy="13.500" r="3" fill="none" stroke="#fff" stroke-width="1.600"/><path d="M14.800 13.500V7.500c0-2-2.300-2.800-3.600-1.800" fill="none" stroke="#fff" stroke-width="1.600"/><path d="M15.500 6.300l2.800 1" stroke="#c41410" stroke-width="2.500"/></svg><div class="b" style="left:357px;top:737px;width:22px;height:21px;background:#0c0c50;border:1.500px solid #8cc0f0;box-sizing:border-box"></div><div class="t" style="left:360.5px;top:740.5px;font-size:13px;line-height:13px;color:#8cc0f0;font-weight:bold;"><span class="l" style="width:15.00px"><span style="transform:scaleX(0.943)">Ps</span></span></div><svg class="b" style="left:663px;top:731px;" width="40" height="24" viewBox="0 0 40 24"><path d="M10 1l9 5v11l-9 5-9-5V6z" fill="#5f8580"/><path d="M5 7.500v6c0 3.500 5 3.500 5 0v-6M13.500 7v10" fill="none" stroke="#1f4942" stroke-width="2.400"/><circle cx="22.500" cy="12.500" r="1" fill="#5f8580"/><path d="M30 9.500c-3-1-5 0-5 3s2.500 4 5 3M32.500 16V8.500M32.500 11c1-2.500 5.500-3 5.500 0v5" fill="none" stroke="#5f8580" stroke-width="1.500"/></svg><svg class="b" style="left:1089.5px;top:744px;" width="13" height="8" viewBox="0 0 13 8"><path d="M.8 7L6.500 1.300 12.200 7" fill="none" stroke="#fff" stroke-width="1.300"/></svg><svg class="b" style="left:1113px;top:741px;" width="14" height="14" viewBox="0 0 14 14"><g fill="#fff"><rect x="0" y="0" width="4" height="4"/><rect x="0" y="5" width="4" height="4"/><rect x="0" y="10" width="4" height="4"/><rect x="5" y="0" width="4" height="4"/><rect x="5" y="5" width="4" height="4"/><rect x="5" y="10" width="4" height="4"/><rect x="10" y="0" width="4" height="4"/><rect x="10" y="5" width="4" height="4"/><rect x="10" y="10" width="4" height="4"/></g></svg><svg class="b" style="left:1135px;top:740.5px;" width="18" height="16" viewBox="0 0 18 16"><rect x="3.500" y="2.500" width="13" height="8.500" fill="none" stroke="#fff" stroke-width="1.200"/><path d="M10 11v3M6.500 14.500h7" stroke="#fff" stroke-width="1.200"/><path d="M.5 1h4v5h-4z" fill="#1f4942" stroke="#fff" stroke-width="1"/><path d="M2.500 6v2.500" stroke="#fff"/></svg><svg class="b" style="left:1159px;top:741.5px;" width="18" height="13" viewBox="0 0 18 13"><path d="M1 4.500h2.500L7 1.200v10.600L3.500 8.500H1z" fill="none" stroke="#fff" stroke-width="1.100"/><path d="M10 4l4.500 5M14.500 4L10 9" stroke="#ddd" stroke-width="1.100"/></svg><svg class="b" style="left:1184px;top:743px;" width="17" height="11" viewBox="0 0 17 11"><rect x=".6" y="1.600" width="14" height="8" fill="none" stroke="#fff" stroke-width="1.200"/><rect x="2.500" y="3.500" width="6" height="4.200" fill="#fff"/><rect x="15" y="4" width="1.500" height="3.500" fill="#fff"/></svg><svg class="b" style="left:1207px;top:739.5px;" width="20" height="18" viewBox="0 0 20 18"><path d="M.5 .5h15v11H.5z" fill="#fff"/><path d="M3 3.500h10M3 6h10M3 8.500h6" stroke="#1f4942" stroke-width="1"/><circle cx="13.500" cy="12" r="3.800" fill="#1f4942" stroke="#fff" stroke-width="1.200"/><path d="M11.500 12h4" stroke="#fff" stroke-width="1.200"/></svg><div class="t" style="left:1232px;top:741px;font-size:14.5px;line-height:14.5px;color:#fff;stroke:currentColor;stroke-width:35"><span class="l" style="width:14.50px"><span style="transform:scaleX(1.000)">中</span></span></div><svg class="b" style="left:1259.5px;top:740px;" width="17" height="16" viewBox="0 0 17 16"><path transform="scale(.85)" d="M2 3.500L15.500.8c2-.4 3.300 1 3.200 2.800l-.7 11c-.1 1.300-1 2.300-2.300 2.500L3.200 18.500c-1.500.2-2.600-1-2.400-2.500z" fill="#f4511e"/><path transform="scale(.85)" d="M14 5.200c-2.500-1.200-7.500-1-7.500 1.500 0 2.300 7 1.800 7 4.600 0 2.600-5.500 2.800-8.300 1.500" fill="none" stroke="#fff" stroke-width="2.200"/></svg><div class="t" style="left:1308px;top:732px;font-size:13px;line-height:13px;color:#fff;"><span class="l" style="width:31.00px"><span style="transform:scaleX(0.953)">22:23</span></span></div><div class="t" style="left:1294px;top:749px;font-size:13px;line-height:13px;color:#fff;"><span class="l" style="width:59.00px"><span style="transform:scaleX(1.020)">2015/8/20</span></span></div><div class="b" style="left:1361px;top:728px;width:1px;height:40px;background:rgba(160,190,185,.5);"></div><div class="b" style="left:748px;top:693px;width:134px;height:32.5px;background:#fff;border-radius:8px;box-shadow:0 0 0 1px #a4bccd,0 1.500px 0 1px #5a84a0,0 3px 3px rgba(0,0,0,.3)"></div><div class="b" style="left:758px;top:697px;width:24px;height:24px;border:1px solid #8aabc2;box-sizing:border-box"></div><div class="b" style="left:788px;top:697px;width:24px;height:24px;border:1px solid #8aabc2;box-sizing:border-box"></div><div class="b" style="left:818px;top:697px;width:24px;height:24px;border:1px solid #8aabc2;box-sizing:border-box"></div><div class="b" style="left:848px;top:697px;width:24px;height:24px;border:1px solid #8aabc2;box-sizing:border-box"></div><div class="t" style="left:761px;top:699.5px;font-size:18.5px;line-height:18.5px;color:#2b668a;stroke:currentColor;stroke-width:20"><span class="l" style="width:18.50px"><span style="transform:scaleX(1.000)">中</span></span></div><svg class="b" style="left:793px;top:702px;" width="16" height="14" viewBox="0 0 16 14"><path d="M3.300 1.200L1.700 6.300" stroke="#2b668a" stroke-width="1.700"/><circle cx="10.800" cy="10" r="1.900" fill="none" stroke="#2b668a" stroke-width="1.400"/></svg><div class="t" style="left:820.5px;top:699.5px;font-size:18.5px;line-height:18.5px;color:#2b668a;stroke:currentColor;stroke-width:20"><span class="l" style="width:18.50px"><span style="transform:scaleX(1.000)">半</span></span></div><div class="t" style="left:851px;top:699.5px;font-size:18.5px;line-height:18.5px;color:#2b668a;stroke:currentColor;stroke-width:20"><span class="l" style="width:18.50px"><span style="transform:scaleX(1.000)">简</span></span></div></body></html>
